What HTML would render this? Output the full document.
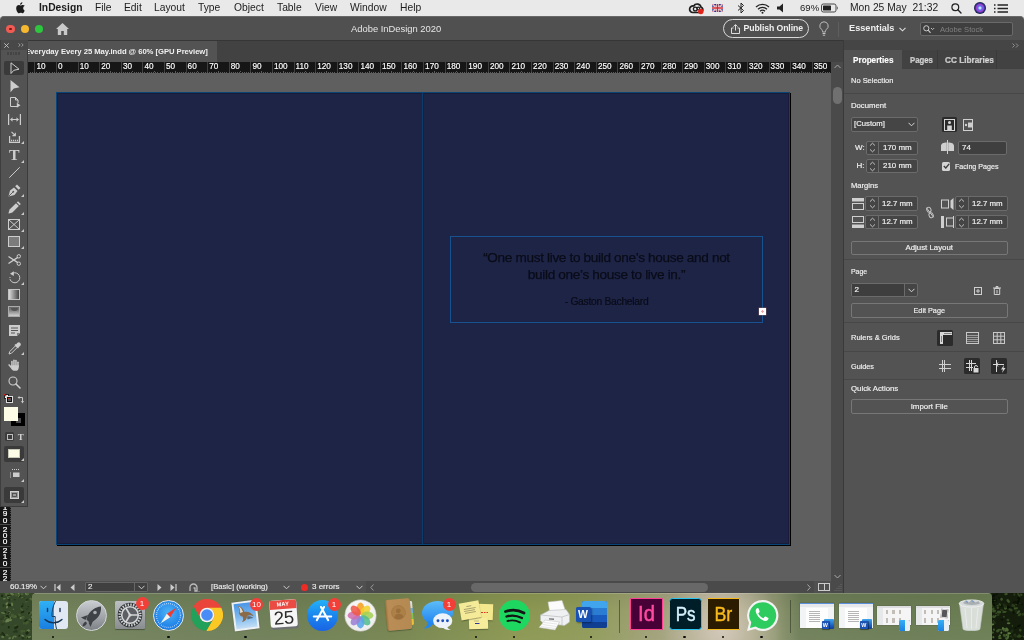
<!DOCTYPE html>
<html lang="en">
<head>
<meta charset="utf-8">
<title>Adobe InDesign 2020</title>
<style>
*{box-sizing:border-box;margin:0;padding:0}
html,body{width:1024px;height:640px;overflow:hidden;background:#1f2a14}
body{position:relative;font-family:"Liberation Sans",sans-serif;color:#e8e8e8;font-size:8px;-webkit-font-smoothing:antialiased}
.abs,.abs-all *{position:absolute}
#root{position:absolute;left:0;top:0;width:1024px;height:640px;overflow:hidden;will-change:transform}
#root div,#root span,#root svg{position:absolute}
.t{white-space:nowrap;line-height:1}
/* mac menubar */
#menubar{left:0;top:0;width:1024px;height:22px;background:#e9e9ea}
#menubar .t{color:#1c1c1c;font-size:10.3px;top:3px}
/* app */
#titlebar{left:0;top:16px;width:1024px;height:24px;background:#505050;border-top:1px solid #686868;border-radius:4px 4px 0 0}
#tabbar{left:28px;top:40px;width:815px;height:22px;background:#424242;border-top:1px solid #363636}
#doctab{left:0;top:0;width:189px;height:21px;background:#535353}
#ruler{left:28px;top:62px;width:803px;height:11px;background:#161616;overflow:hidden}
#ruler .t{font-size:8.200px;color:#fff;top:1px;-webkit-text-stroke:.15px #fff}
#ruler i{position:absolute;top:0;width:1px;height:11px;background:#404040}
#paste{left:28px;top:73px;width:803px;height:508px;background:#5f5f5f}
#vruler{left:0;top:507px;width:11px;height:74px;background:#161616;overflow:hidden}
#tools{left:1px;top:40px;width:27px;height:467px;background:#535353;border-right:1px solid #3c3c3c;border-bottom:1px solid #3c3c3c}
#vscroll{left:831px;top:62px;width:12px;height:519px;background:#4a4a4a}
#status{left:0;top:581px;width:843px;height:12px;background:#505050}
#status .t{font-size:8px;color:#ececec;top:2px;-webkit-text-stroke:.15px #ececec}
#panel{left:843px;top:40px;width:181px;height:553px;background:#535353;border-left:1px solid #3a3a3a}
#panel .t{font-size:8px;color:#f0f0f0;-webkit-text-stroke:.18px #f0f0f0}
.fld{background:#454545;border:1px solid #6b6b6b;border-radius:2px}
.btn{border:1px solid #777;border-radius:2px;text-align:center}
.hr{height:1px;background:#474747;left:0;width:181px}
/* dock */
#dock{left:32px;top:593px;width:960px;height:47px;border-radius:4px 4px 0 0;overflow:hidden}
.dot{width:2.600px;height:2.600px;border-radius:50%;background:#0c0c0c;top:635.700px;margin-left:-.3px}
.badge{width:13px;height:13px;border-radius:50%;background:#f23f38;color:#fff;font-size:8px;text-align:center;line-height:13px;margin:-.5px 0 0 -.5px}
</style>
</head>
<body>
<div id="root">

<!-- DESKTOP -->
<div id="desk" style="left:0;top:592px;width:1024px;height:48px;background:#1c2612"></div><svg style="left:0px;top:593px" width="33" height="47" viewBox="0 0 33 47"><rect width="33" height="47" fill="#36482a"/><ellipse cx="10.7" cy="7.1" rx="1.8" ry="0.7" fill="#44592f" transform="rotate(-49 10.7 7.1)"/><ellipse cx="19.2" cy="42.8" rx="1.1" ry="0.7" fill="#1c2a12" transform="rotate(-52 19.2 42.8)"/><ellipse cx="3.0" cy="20.0" rx="2.1" ry="0.7" fill="#5e7645" transform="rotate(16 3.0 20.0)"/><ellipse cx="19.2" cy="2.9" rx="1.7" ry="0.6" fill="#5e7645" transform="rotate(-54 19.2 2.9)"/><ellipse cx="28.3" cy="13.6" rx="1.0" ry="0.7" fill="#26361a" transform="rotate(7 28.3 13.6)"/><ellipse cx="22.5" cy="4.8" rx="1.7" ry="0.8" fill="#4f6638" transform="rotate(6 22.5 4.8)"/><ellipse cx="2.1" cy="2.8" rx="1.1" ry="1.3" fill="#1c2a12" transform="rotate(33 2.1 2.8)"/><ellipse cx="15.4" cy="43.4" rx="1.4" ry="0.8" fill="#5e7645" transform="rotate(24 15.4 43.4)"/><ellipse cx="8.1" cy="27.0" rx="1.6" ry="1.5" fill="#6b8050" transform="rotate(-6 8.1 27.0)"/><ellipse cx="20.1" cy="3.4" rx="1.6" ry="0.8" fill="#26361a" transform="rotate(-42 20.1 3.4)"/><ellipse cx="16.1" cy="1.8" rx="1.9" ry="1.4" fill="#44592f" transform="rotate(35 16.1 1.8)"/><ellipse cx="27.0" cy="16.0" rx="1.4" ry="1.1" fill="#2f4122" transform="rotate(-5 27.0 16.0)"/><ellipse cx="27.7" cy="44.4" rx="1.6" ry="1.3" fill="#4f6638" transform="rotate(28 27.7 44.4)"/><ellipse cx="10.2" cy="27.2" rx="1.9" ry="1.0" fill="#6b8050" transform="rotate(-14 10.2 27.2)"/><ellipse cx="22.1" cy="1.1" rx="1.5" ry="0.8" fill="#4f6638" transform="rotate(-1 22.1 1.1)"/><ellipse cx="7.2" cy="13.5" rx="2.0" ry="1.0" fill="#2f4122" transform="rotate(-0 7.2 13.5)"/><ellipse cx="5.5" cy="18.9" rx="1.2" ry="0.7" fill="#1c2a12" transform="rotate(44 5.5 18.9)"/><ellipse cx="9.2" cy="19.5" rx="1.4" ry="1.5" fill="#5e7645" transform="rotate(-42 9.2 19.5)"/><ellipse cx="5.8" cy="10.9" rx="1.2" ry="1.1" fill="#44592f" transform="rotate(-38 5.8 10.9)"/><ellipse cx="9.3" cy="6.8" rx="1.7" ry="1.2" fill="#26361a" transform="rotate(54 9.3 6.8)"/><ellipse cx="22.8" cy="24.2" rx="1.8" ry="1.3" fill="#4f6638" transform="rotate(-5 22.8 24.2)"/><ellipse cx="28.7" cy="44.7" rx="1.9" ry="1.2" fill="#1c2a12" transform="rotate(-12 28.7 44.7)"/><ellipse cx="3.4" cy="29.8" rx="0.9" ry="0.7" fill="#5e7645" transform="rotate(-7 3.4 29.8)"/><ellipse cx="3.6" cy="28.2" rx="1.0" ry="1.2" fill="#44592f" transform="rotate(-48 3.6 28.2)"/><ellipse cx="12.0" cy="1.2" rx="2.2" ry="1.2" fill="#5e7645" transform="rotate(16 12.0 1.2)"/><ellipse cx="31.5" cy="28.3" rx="1.6" ry="0.7" fill="#1c2a12" transform="rotate(59 31.5 28.3)"/><ellipse cx="15.4" cy="22.7" rx="0.9" ry="0.7" fill="#26361a" transform="rotate(29 15.4 22.7)"/><ellipse cx="15.8" cy="32.5" rx="1.6" ry="0.8" fill="#44592f" transform="rotate(-17 15.8 32.5)"/><ellipse cx="22.8" cy="43.0" rx="2.0" ry="0.9" fill="#6b8050" transform="rotate(44 22.8 43.0)"/><ellipse cx="23.0" cy="12.3" rx="1.4" ry="0.8" fill="#2f4122" transform="rotate(-33 23.0 12.3)"/><ellipse cx="17.9" cy="23.6" rx="1.8" ry="1.2" fill="#2f4122" transform="rotate(58 17.9 23.6)"/><ellipse cx="28.1" cy="37.9" rx="2.1" ry="1.3" fill="#5e7645" transform="rotate(-36 28.1 37.9)"/><ellipse cx="16.3" cy="34.4" rx="2.4" ry="1.4" fill="#1c2a12" transform="rotate(-29 16.3 34.4)"/><ellipse cx="22.9" cy="45.0" rx="1.5" ry="1.5" fill="#26361a" transform="rotate(55 22.9 45.0)"/><ellipse cx="12.0" cy="10.4" rx="1.2" ry="0.8" fill="#5e7645" transform="rotate(-2 12.0 10.4)"/><ellipse cx="32.5" cy="28.7" rx="0.8" ry="1.5" fill="#26361a" transform="rotate(36 32.5 28.7)"/><ellipse cx="2.8" cy="31.0" rx="2.3" ry="1.4" fill="#2f4122" transform="rotate(-36 2.8 31.0)"/><ellipse cx="29.3" cy="20.4" rx="1.8" ry="0.7" fill="#6b8050" transform="rotate(-12 29.3 20.4)"/><ellipse cx="13.2" cy="44.5" rx="2.0" ry="0.8" fill="#5e7645" transform="rotate(-57 13.2 44.5)"/><ellipse cx="19.5" cy="21.9" rx="1.8" ry="1.2" fill="#44592f" transform="rotate(58 19.5 21.9)"/><ellipse cx="21.7" cy="16.5" rx="1.7" ry="0.7" fill="#4f6638" transform="rotate(36 21.7 16.5)"/><ellipse cx="24.0" cy="4.8" rx="2.0" ry="0.7" fill="#2f4122" transform="rotate(-37 24.0 4.8)"/><ellipse cx="28.8" cy="1.3" rx="1.1" ry="1.1" fill="#2f4122" transform="rotate(10 28.8 1.3)"/><ellipse cx="8.6" cy="19.7" rx="1.0" ry="1.5" fill="#26361a" transform="rotate(48 8.6 19.7)"/><ellipse cx="21.9" cy="38.3" rx="1.6" ry="1.4" fill="#44592f" transform="rotate(-44 21.9 38.3)"/><ellipse cx="5.0" cy="24.0" rx="2.2" ry="1.4" fill="#44592f" transform="rotate(-60 5.0 24.0)"/><ellipse cx="26.4" cy="8.1" rx="1.6" ry="1.3" fill="#44592f" transform="rotate(-53 26.4 8.1)"/><ellipse cx="22.5" cy="24.9" rx="1.6" ry="1.4" fill="#44592f" transform="rotate(-53 22.5 24.9)"/><ellipse cx="6.3" cy="2.0" rx="1.0" ry="1.1" fill="#4f6638" transform="rotate(31 6.3 2.0)"/><ellipse cx="30.1" cy="20.8" rx="1.8" ry="1.1" fill="#44592f" transform="rotate(-36 30.1 20.8)"/><ellipse cx="9.1" cy="23.9" rx="2.1" ry="1.1" fill="#5e7645" transform="rotate(24 9.1 23.9)"/><ellipse cx="28.9" cy="44.3" rx="1.2" ry="1.2" fill="#5e7645" transform="rotate(41 28.9 44.3)"/><ellipse cx="4.5" cy="5.7" rx="1.5" ry="0.7" fill="#5e7645" transform="rotate(-9 4.5 5.7)"/><ellipse cx="7.0" cy="14.2" rx="1.0" ry="1.4" fill="#6b8050" transform="rotate(17 7.0 14.2)"/><ellipse cx="12.1" cy="11.9" rx="1.0" ry="1.1" fill="#6b8050" transform="rotate(54 12.1 11.9)"/><ellipse cx="13.1" cy="22.9" rx="2.4" ry="1.4" fill="#5e7645" transform="rotate(25 13.1 22.9)"/><ellipse cx="32.8" cy="19.0" rx="1.5" ry="1.0" fill="#4f6638" transform="rotate(27 32.8 19.0)"/><ellipse cx="0.6" cy="26.0" rx="1.5" ry="0.6" fill="#26361a" transform="rotate(2 0.6 26.0)"/><ellipse cx="9.7" cy="45.2" rx="1.0" ry="1.5" fill="#5e7645" transform="rotate(57 9.7 45.2)"/><ellipse cx="3.5" cy="12.5" rx="0.9" ry="1.4" fill="#26361a" transform="rotate(31 3.5 12.5)"/><ellipse cx="27.1" cy="39.9" rx="1.9" ry="1.5" fill="#1c2a12" transform="rotate(-42 27.1 39.9)"/><ellipse cx="30.3" cy="26.8" rx="1.9" ry="0.7" fill="#4f6638" transform="rotate(36 30.3 26.8)"/><ellipse cx="6.1" cy="42.1" rx="1.2" ry="0.6" fill="#4f6638" transform="rotate(36 6.1 42.1)"/><ellipse cx="2.8" cy="40.2" rx="0.9" ry="1.5" fill="#1c2a12" transform="rotate(-59 2.8 40.2)"/><ellipse cx="32.8" cy="19.6" rx="2.3" ry="1.2" fill="#4f6638" transform="rotate(3 32.8 19.6)"/><ellipse cx="7.9" cy="5.1" rx="1.1" ry="0.7" fill="#5e7645" transform="rotate(52 7.9 5.1)"/><ellipse cx="20.7" cy="25.0" rx="1.1" ry="1.0" fill="#6b8050" transform="rotate(-39 20.7 25.0)"/><ellipse cx="11.5" cy="0.9" rx="1.2" ry="0.6" fill="#6b8050" transform="rotate(1 11.5 0.9)"/><ellipse cx="32.3" cy="24.2" rx="1.2" ry="1.0" fill="#6b8050" transform="rotate(38 32.3 24.2)"/><ellipse cx="14.3" cy="23.3" rx="2.1" ry="1.0" fill="#44592f" transform="rotate(-23 14.3 23.3)"/><ellipse cx="7.1" cy="10.8" rx="1.1" ry="1.5" fill="#6b8050" transform="rotate(16 7.1 10.8)"/><ellipse cx="13.4" cy="16.3" rx="0.9" ry="0.7" fill="#4f6638" transform="rotate(15 13.4 16.3)"/><ellipse cx="29.0" cy="20.2" rx="0.9" ry="1.3" fill="#1c2a12" transform="rotate(44 29.0 20.2)"/><ellipse cx="22.1" cy="13.3" rx="1.2" ry="0.9" fill="#1c2a12" transform="rotate(-38 22.1 13.3)"/><ellipse cx="8.9" cy="0.2" rx="1.4" ry="0.9" fill="#44592f" transform="rotate(-21 8.9 0.2)"/><ellipse cx="1.1" cy="41.5" rx="1.1" ry="0.8" fill="#26361a" transform="rotate(-14 1.1 41.5)"/><ellipse cx="15.7" cy="23.6" rx="1.1" ry="1.1" fill="#4f6638" transform="rotate(-49 15.7 23.6)"/><ellipse cx="27.0" cy="6.8" rx="1.7" ry="1.0" fill="#26361a" transform="rotate(-23 27.0 6.8)"/><ellipse cx="7.7" cy="27.5" rx="1.6" ry="1.4" fill="#6b8050" transform="rotate(47 7.7 27.5)"/><ellipse cx="25.9" cy="28.0" rx="2.0" ry="1.3" fill="#1c2a12" transform="rotate(-42 25.9 28.0)"/><ellipse cx="23.9" cy="30.2" rx="0.9" ry="1.4" fill="#44592f" transform="rotate(15 23.9 30.2)"/><ellipse cx="24.2" cy="38.2" rx="1.0" ry="1.1" fill="#44592f" transform="rotate(8 24.2 38.2)"/><ellipse cx="26.8" cy="0.8" rx="1.9" ry="1.4" fill="#6b8050" transform="rotate(22 26.8 0.8)"/><ellipse cx="22.9" cy="10.8" rx="0.8" ry="0.7" fill="#26361a" transform="rotate(55 22.9 10.8)"/><ellipse cx="12.4" cy="21.2" rx="0.9" ry="0.6" fill="#44592f" transform="rotate(22 12.4 21.2)"/><ellipse cx="16.1" cy="0.2" rx="2.1" ry="1.3" fill="#44592f" transform="rotate(48 16.1 0.2)"/><ellipse cx="3.0" cy="24.7" rx="2.0" ry="1.1" fill="#2f4122" transform="rotate(-51 3.0 24.7)"/><ellipse cx="8.8" cy="34.3" rx="1.1" ry="1.3" fill="#1c2a12" transform="rotate(-1 8.8 34.3)"/><ellipse cx="12.6" cy="22.5" rx="1.9" ry="1.4" fill="#44592f" transform="rotate(16 12.6 22.5)"/><ellipse cx="6.5" cy="28.2" rx="1.3" ry="1.3" fill="#6b8050" transform="rotate(-23 6.5 28.2)"/><ellipse cx="18.7" cy="0.6" rx="0.9" ry="0.9" fill="#6b8050" transform="rotate(-48 18.7 0.6)"/><ellipse cx="7.2" cy="23.0" rx="1.9" ry="0.9" fill="#1c2a12" transform="rotate(-4 7.2 23.0)"/><ellipse cx="3.9" cy="42.0" rx="1.1" ry="1.6" fill="#1c2a12" transform="rotate(-58 3.9 42.0)"/><ellipse cx="15.1" cy="38.5" rx="2.3" ry="1.0" fill="#26361a" transform="rotate(-14 15.1 38.5)"/><ellipse cx="30.2" cy="43.7" rx="0.9" ry="0.7" fill="#6b8050" transform="rotate(3 30.2 43.7)"/><ellipse cx="31.4" cy="6.2" rx="2.1" ry="1.1" fill="#4f6638" transform="rotate(24 31.4 6.2)"/><ellipse cx="7.6" cy="42.2" rx="1.6" ry="0.6" fill="#4f6638" transform="rotate(54 7.6 42.2)"/><ellipse cx="22.5" cy="19.1" rx="2.0" ry="1.0" fill="#1c2a12" transform="rotate(-22 22.5 19.1)"/><ellipse cx="27.7" cy="0.1" rx="2.0" ry="1.4" fill="#4f6638" transform="rotate(53 27.7 0.1)"/><ellipse cx="6.5" cy="0.6" rx="2.0" ry="0.9" fill="#4f6638" transform="rotate(-13 6.5 0.6)"/><ellipse cx="33.0" cy="27.7" rx="1.4" ry="1.0" fill="#26361a" transform="rotate(43 33.0 27.7)"/><ellipse cx="9.3" cy="2.4" rx="1.9" ry="1.2" fill="#5e7645" transform="rotate(-30 9.3 2.4)"/><ellipse cx="8.8" cy="24.0" rx="1.1" ry="1.0" fill="#1c2a12" transform="rotate(46 8.8 24.0)"/><ellipse cx="26.8" cy="29.7" rx="2.3" ry="1.5" fill="#44592f" transform="rotate(-36 26.8 29.7)"/><ellipse cx="2.7" cy="43.9" rx="1.5" ry="1.2" fill="#5e7645" transform="rotate(17 2.7 43.9)"/><ellipse cx="9.4" cy="2.3" rx="2.3" ry="0.7" fill="#1c2a12" transform="rotate(-10 9.4 2.3)"/><ellipse cx="9.3" cy="12.0" rx="2.0" ry="1.3" fill="#1c2a12" transform="rotate(19 9.3 12.0)"/><ellipse cx="9.9" cy="26.2" rx="1.4" ry="0.8" fill="#5e7645" transform="rotate(-51 9.9 26.2)"/><ellipse cx="16.5" cy="38.2" rx="1.7" ry="1.1" fill="#26361a" transform="rotate(60 16.5 38.2)"/><ellipse cx="14.8" cy="6.6" rx="1.1" ry="0.7" fill="#26361a" transform="rotate(7 14.8 6.6)"/></svg><svg style="left:992px;top:593px" width="32" height="47" viewBox="0 0 32 47"><rect width="32" height="47" fill="#141d0c"/><ellipse cx="10.2" cy="17.3" rx="2.1" ry="0.8" fill="#2a3b1a" transform="rotate(30 10.2 17.3)"/><ellipse cx="13.2" cy="19.5" rx="1.6" ry="1.0" fill="#0c1206" transform="rotate(30 13.2 19.5)"/><ellipse cx="15.9" cy="27.0" rx="1.4" ry="1.3" fill="#33481f" transform="rotate(16 15.9 27.0)"/><ellipse cx="27.6" cy="10.2" rx="1.2" ry="0.8" fill="#1f2d12" transform="rotate(17 27.6 10.2)"/><ellipse cx="13.8" cy="14.7" rx="2.1" ry="1.6" fill="#3c5228" transform="rotate(-56 13.8 14.7)"/><ellipse cx="22.7" cy="42.1" rx="1.6" ry="1.2" fill="#2a3b1a" transform="rotate(-51 22.7 42.1)"/><ellipse cx="29.8" cy="43.6" rx="1.6" ry="1.1" fill="#1f2d12" transform="rotate(-30 29.8 43.6)"/><ellipse cx="3.5" cy="7.3" rx="1.6" ry="1.3" fill="#0a0f05" transform="rotate(24 3.5 7.3)"/><ellipse cx="27.1" cy="42.1" rx="0.9" ry="1.4" fill="#2a3b1a" transform="rotate(34 27.1 42.1)"/><ellipse cx="7.4" cy="43.2" rx="1.8" ry="0.9" fill="#3c5228" transform="rotate(-30 7.4 43.2)"/><ellipse cx="20.4" cy="32.8" rx="1.0" ry="0.7" fill="#33481f" transform="rotate(53 20.4 32.8)"/><ellipse cx="6.1" cy="12.3" rx="2.1" ry="0.6" fill="#33481f" transform="rotate(-24 6.1 12.3)"/><ellipse cx="14.7" cy="45.1" rx="1.8" ry="1.5" fill="#3c5228" transform="rotate(-32 14.7 45.1)"/><ellipse cx="7.9" cy="45.1" rx="1.9" ry="0.9" fill="#4f6a35" transform="rotate(-0 7.9 45.1)"/><ellipse cx="21.6" cy="19.7" rx="1.2" ry="1.3" fill="#0c1206" transform="rotate(-33 21.6 19.7)"/><ellipse cx="1.1" cy="15.9" rx="1.5" ry="1.3" fill="#3c5228" transform="rotate(-59 1.1 15.9)"/><ellipse cx="9.3" cy="39.7" rx="0.9" ry="1.1" fill="#5f7a45" transform="rotate(32 9.3 39.7)"/><ellipse cx="6.2" cy="21.9" rx="1.2" ry="1.5" fill="#2a3b1a" transform="rotate(54 6.2 21.9)"/><ellipse cx="15.9" cy="8.8" rx="1.2" ry="1.0" fill="#0a0f05" transform="rotate(-53 15.9 8.8)"/><ellipse cx="19.0" cy="43.3" rx="0.9" ry="0.6" fill="#33481f" transform="rotate(-43 19.0 43.3)"/><ellipse cx="1.7" cy="2.8" rx="1.4" ry="1.5" fill="#0c1206" transform="rotate(28 1.7 2.8)"/><ellipse cx="31.9" cy="43.8" rx="1.3" ry="0.8" fill="#33481f" transform="rotate(30 31.9 43.8)"/><ellipse cx="1.0" cy="31.2" rx="1.4" ry="1.0" fill="#5f7a45" transform="rotate(-40 1.0 31.2)"/><ellipse cx="0.1" cy="13.2" rx="1.4" ry="1.6" fill="#2a3b1a" transform="rotate(7 0.1 13.2)"/><ellipse cx="24.3" cy="17.9" rx="2.0" ry="0.9" fill="#1f2d12" transform="rotate(-49 24.3 17.9)"/><ellipse cx="22.6" cy="9.2" rx="1.7" ry="1.0" fill="#0c1206" transform="rotate(-16 22.6 9.2)"/><ellipse cx="28.7" cy="1.4" rx="1.5" ry="1.4" fill="#1f2d12" transform="rotate(-55 28.7 1.4)"/><ellipse cx="1.1" cy="2.9" rx="2.3" ry="0.9" fill="#0a0f05" transform="rotate(-52 1.1 2.9)"/><ellipse cx="19.4" cy="17.1" rx="1.3" ry="1.6" fill="#2a3b1a" transform="rotate(-29 19.4 17.1)"/><ellipse cx="22.9" cy="14.9" rx="1.2" ry="0.6" fill="#33481f" transform="rotate(50 22.9 14.9)"/><ellipse cx="20.3" cy="44.3" rx="0.8" ry="0.8" fill="#1f2d12" transform="rotate(26 20.3 44.3)"/><ellipse cx="14.9" cy="36.5" rx="2.1" ry="1.5" fill="#4f6a35" transform="rotate(51 14.9 36.5)"/><ellipse cx="5.9" cy="37.7" rx="2.0" ry="1.4" fill="#3c5228" transform="rotate(-32 5.9 37.7)"/><ellipse cx="27.6" cy="21.7" rx="2.1" ry="1.2" fill="#33481f" transform="rotate(-36 27.6 21.7)"/><ellipse cx="24.1" cy="11.6" rx="0.9" ry="0.6" fill="#33481f" transform="rotate(5 24.1 11.6)"/><ellipse cx="5.1" cy="20.0" rx="1.0" ry="0.7" fill="#33481f" transform="rotate(-50 5.1 20.0)"/><ellipse cx="3.1" cy="23.4" rx="1.9" ry="1.0" fill="#3c5228" transform="rotate(-44 3.1 23.4)"/><ellipse cx="14.7" cy="41.9" rx="1.2" ry="1.1" fill="#4f6a35" transform="rotate(34 14.7 41.9)"/><ellipse cx="9.4" cy="13.1" rx="1.2" ry="0.9" fill="#0c1206" transform="rotate(-36 9.4 13.1)"/><ellipse cx="7.9" cy="11.5" rx="1.0" ry="1.5" fill="#33481f" transform="rotate(-37 7.9 11.5)"/><ellipse cx="2.1" cy="11.8" rx="1.2" ry="1.1" fill="#0a0f05" transform="rotate(37 2.1 11.8)"/><ellipse cx="20.9" cy="46.6" rx="1.0" ry="1.1" fill="#3c5228" transform="rotate(41 20.9 46.6)"/><ellipse cx="29.3" cy="1.9" rx="1.3" ry="0.7" fill="#3c5228" transform="rotate(12 29.3 1.9)"/><ellipse cx="26.5" cy="9.1" rx="0.9" ry="1.1" fill="#3c5228" transform="rotate(-6 26.5 9.1)"/><ellipse cx="8.3" cy="36.6" rx="2.3" ry="0.7" fill="#3c5228" transform="rotate(14 8.3 36.6)"/><ellipse cx="7.0" cy="17.3" rx="1.0" ry="0.8" fill="#0c1206" transform="rotate(-55 7.0 17.3)"/><ellipse cx="23.4" cy="43.0" rx="2.1" ry="1.4" fill="#1f2d12" transform="rotate(21 23.4 43.0)"/><ellipse cx="5.9" cy="14.7" rx="1.1" ry="1.4" fill="#33481f" transform="rotate(-2 5.9 14.7)"/><ellipse cx="13.1" cy="37.4" rx="1.9" ry="0.8" fill="#4f6a35" transform="rotate(18 13.1 37.4)"/><ellipse cx="12.7" cy="12.7" rx="2.4" ry="1.3" fill="#1f2d12" transform="rotate(54 12.7 12.7)"/><ellipse cx="10.0" cy="26.6" rx="1.4" ry="1.0" fill="#0c1206" transform="rotate(17 10.0 26.6)"/><ellipse cx="12.5" cy="19.0" rx="2.3" ry="1.0" fill="#3c5228" transform="rotate(-9 12.5 19.0)"/><ellipse cx="26.3" cy="19.1" rx="2.2" ry="1.1" fill="#3c5228" transform="rotate(-44 26.3 19.1)"/><ellipse cx="1.7" cy="6.7" rx="2.1" ry="1.0" fill="#33481f" transform="rotate(15 1.7 6.7)"/><ellipse cx="11.9" cy="23.7" rx="1.0" ry="0.9" fill="#33481f" transform="rotate(-39 11.9 23.7)"/><ellipse cx="2.1" cy="18.0" rx="2.0" ry="1.4" fill="#3c5228" transform="rotate(-24 2.1 18.0)"/><ellipse cx="26.8" cy="2.0" rx="2.3" ry="0.9" fill="#33481f" transform="rotate(51 26.8 2.0)"/><ellipse cx="12.4" cy="42.5" rx="1.8" ry="1.4" fill="#3c5228" transform="rotate(34 12.4 42.5)"/><ellipse cx="7.1" cy="19.0" rx="2.2" ry="1.4" fill="#3c5228" transform="rotate(8 7.1 19.0)"/><ellipse cx="1.3" cy="44.1" rx="1.1" ry="1.0" fill="#4f6a35" transform="rotate(56 1.3 44.1)"/><ellipse cx="26.1" cy="9.1" rx="2.2" ry="1.4" fill="#0a0f05" transform="rotate(-55 26.1 9.1)"/><ellipse cx="26.8" cy="5.5" rx="1.8" ry="1.2" fill="#0a0f05" transform="rotate(33 26.8 5.5)"/><ellipse cx="20.8" cy="14.5" rx="1.2" ry="1.0" fill="#0c1206" transform="rotate(-6 20.8 14.5)"/><ellipse cx="14.0" cy="1.1" rx="1.8" ry="1.1" fill="#3c5228" transform="rotate(-6 14.0 1.1)"/><ellipse cx="19.8" cy="38.5" rx="2.1" ry="1.4" fill="#1f2d12" transform="rotate(-47 19.8 38.5)"/><ellipse cx="4.1" cy="20.2" rx="0.9" ry="1.0" fill="#33481f" transform="rotate(19 4.1 20.2)"/><ellipse cx="1.3" cy="6.1" rx="2.3" ry="0.9" fill="#0a0f05" transform="rotate(1 1.3 6.1)"/><ellipse cx="1.7" cy="23.7" rx="1.4" ry="1.6" fill="#3c5228" transform="rotate(-57 1.7 23.7)"/><ellipse cx="2.1" cy="28.9" rx="1.9" ry="0.7" fill="#3c5228" transform="rotate(58 2.1 28.9)"/><ellipse cx="15.7" cy="45.0" rx="2.3" ry="0.8" fill="#4f6a35" transform="rotate(-52 15.7 45.0)"/><ellipse cx="11.2" cy="35.5" rx="1.1" ry="1.5" fill="#5f7a45" transform="rotate(-43 11.2 35.5)"/><ellipse cx="16.1" cy="43.2" rx="1.1" ry="0.9" fill="#4f6a35" transform="rotate(-22 16.1 43.2)"/><ellipse cx="1.2" cy="8.6" rx="1.1" ry="1.5" fill="#0a0f05" transform="rotate(-21 1.2 8.6)"/><ellipse cx="12.1" cy="37.2" rx="1.2" ry="1.4" fill="#3c5228" transform="rotate(43 12.1 37.2)"/><ellipse cx="30.9" cy="21.3" rx="1.6" ry="1.3" fill="#2a3b1a" transform="rotate(-30 30.9 21.3)"/><ellipse cx="17.1" cy="40.3" rx="2.0" ry="1.0" fill="#5f7a45" transform="rotate(9 17.1 40.3)"/><ellipse cx="11.5" cy="35.9" rx="1.5" ry="0.8" fill="#4f6a35" transform="rotate(-24 11.5 35.9)"/><ellipse cx="16.5" cy="14.6" rx="2.3" ry="1.5" fill="#0a0f05" transform="rotate(47 16.5 14.6)"/><ellipse cx="23.5" cy="35.1" rx="1.2" ry="0.9" fill="#0a0f05" transform="rotate(-8 23.5 35.1)"/><ellipse cx="16.4" cy="42.1" rx="1.0" ry="0.8" fill="#4f6a35" transform="rotate(-57 16.4 42.1)"/><ellipse cx="0.1" cy="16.7" rx="1.0" ry="1.0" fill="#3c5228" transform="rotate(-10 0.1 16.7)"/><ellipse cx="9.6" cy="6.3" rx="1.4" ry="1.4" fill="#3c5228" transform="rotate(-44 9.6 6.3)"/><ellipse cx="30.0" cy="11.4" rx="1.0" ry="0.7" fill="#0a0f05" transform="rotate(-43 30.0 11.4)"/><ellipse cx="21.3" cy="12.7" rx="2.1" ry="1.6" fill="#2a3b1a" transform="rotate(17 21.3 12.7)"/><ellipse cx="18.0" cy="16.5" rx="1.8" ry="1.0" fill="#33481f" transform="rotate(28 18.0 16.5)"/><ellipse cx="8.0" cy="42.5" rx="0.9" ry="1.1" fill="#4f6a35" transform="rotate(-31 8.0 42.5)"/><ellipse cx="1.9" cy="36.6" rx="0.8" ry="1.2" fill="#4f6a35" transform="rotate(-10 1.9 36.6)"/><ellipse cx="16.6" cy="30.2" rx="1.8" ry="1.0" fill="#4f6a35" transform="rotate(1 16.6 30.2)"/><ellipse cx="2.0" cy="29.4" rx="2.4" ry="1.3" fill="#1f2d12" transform="rotate(26 2.0 29.4)"/><ellipse cx="0.2" cy="39.7" rx="2.0" ry="1.1" fill="#3c5228" transform="rotate(-6 0.2 39.7)"/><ellipse cx="7.2" cy="4.9" rx="1.2" ry="0.6" fill="#0c1206" transform="rotate(47 7.2 4.9)"/><ellipse cx="29.6" cy="44.3" rx="1.2" ry="0.7" fill="#0a0f05" transform="rotate(6 29.6 44.3)"/><ellipse cx="14.0" cy="37.1" rx="1.6" ry="0.9" fill="#4f6a35" transform="rotate(-50 14.0 37.1)"/><ellipse cx="16.2" cy="8.0" rx="2.2" ry="1.4" fill="#3c5228" transform="rotate(53 16.2 8.0)"/><ellipse cx="23.9" cy="15.4" rx="2.2" ry="0.9" fill="#3c5228" transform="rotate(-14 23.9 15.4)"/><ellipse cx="27.3" cy="43.3" rx="2.4" ry="1.4" fill="#33481f" transform="rotate(-4 27.3 43.3)"/><ellipse cx="26.9" cy="32.8" rx="2.2" ry="1.0" fill="#0a0f05" transform="rotate(-32 26.9 32.8)"/><ellipse cx="28.3" cy="37.1" rx="1.4" ry="1.2" fill="#33481f" transform="rotate(49 28.3 37.1)"/><ellipse cx="4.6" cy="1.3" rx="1.0" ry="1.5" fill="#0c1206" transform="rotate(57 4.6 1.3)"/><ellipse cx="22.4" cy="1.5" rx="1.0" ry="1.2" fill="#2a3b1a" transform="rotate(24 22.4 1.5)"/></svg>

<!-- MENUBAR -->
<div id="menubar">
<svg style="left:15px;top:2px" width="11" height="12" viewBox="0 0 170 200"><path fill="#1c1c1c" d="M150 68c-1 1-20 11-20 35 0 28 24 37 25 38 0 1-4 13-12 25-7 11-15 21-27 21s-15-7-28-7c-13 0-18 7-29 7s-19-10-27-22C21 150 13 126 13 104c0-36 23-55 46-55 12 0 22 8 30 8 7 0 19-9 33-9 5 0 24 1 37 19zM106 34c6-7 10-17 10-26 0-1 0-3-1-4-9 0-20 6-27 14-5 6-10 15-10 25 0 1 0 3 1 3 1 0 2 1 3 1 8 0 18-6 24-13z"/></svg>
<span class="t" style="left:39px;font-weight:bold">InDesign</span>
<span class="t" style="left:95px">File</span>
<span class="t" style="left:124px">Edit</span>
<span class="t" style="left:154px">Layout</span>
<span class="t" style="left:198px">Type</span>
<span class="t" style="left:234px">Object</span>
<span class="t" style="left:277px">Table</span>
<span class="t" style="left:315px">View</span>
<span class="t" style="left:350px">Window</span>
<span class="t" style="left:400px">Help</span>
<!-- right status icons -->
<svg style="left:688px;top:1.500px" width="17" height="13" viewBox="0 0 17 13"><path d="M4.800 10.500a3.300 3.300 0 1 1 .9-6.500 4 4 0 0 1 7.400 1.300 2.700 2.700 0 0 1-.6 5.200z" fill="none" stroke="#1e1e1e" stroke-width="1.700"/><circle cx="7.300" cy="7" r="1.900" fill="none" stroke="#1e1e1e" stroke-width="1.300"/><circle cx="10.300" cy="6.500" r="1.400" fill="none" stroke="#1e1e1e" stroke-width="1.100"/><circle cx="12.800" cy="9.500" r="2.700" fill="#e3241b"/></svg>
<svg style="left:712px;top:4px" width="11" height="8" viewBox="0 0 22 16"><rect width="22" height="16" fill="#2b3a8c"/><path d="M0 0L22 16M22 0L0 16" stroke="#fff" stroke-width="3"/><path d="M0 0L22 16M22 0L0 16" stroke="#cf2a35" stroke-width="1.200"/><path d="M11 0V16M0 8H22" stroke="#fff" stroke-width="5"/><path d="M11 0V16M0 8H22" stroke="#cf2a35" stroke-width="3"/></svg>
<svg style="left:737px;top:2px" width="8" height="12" viewBox="0 0 8 12"><path d="M1 3.500L6.500 8.500 4 11V1L6.500 3.500 1 8.500" fill="none" stroke="#222" stroke-width="1"/></svg>
<svg style="left:755px;top:3px" width="15" height="11" viewBox="0 0 15 11"><path d="M1 4a9.500 9.500 0 0 1 13 0M3 6.200a6.500 6.500 0 0 1 9 0M5 8.300a3.600 3.600 0 0 1 5 0" fill="none" stroke="#222" stroke-width="1.300"/><circle cx="7.500" cy="9.800" r="1" fill="#222"/></svg>
<svg style="left:777px;top:3px" width="9" height="10" viewBox="0 0 9 10"><path d="M0 3.500h2.500L6 .5v9L2.500 6.500H0z" fill="#222"/></svg>
<span class="t" style="left:800px;font-size:9.600px;top:2.800px">69%</span>
<svg style="left:821px;top:3px" width="18" height="10" viewBox="0 0 18 10"><rect x=".5" y="1" width="14.500" height="8" rx="1.800" fill="none" stroke="#444" stroke-width="1"/><rect x="2" y="2.500" width="8" height="5" rx=".6" fill="#222"/><path d="M16 3.500v3c1-.2 1-2.800 0-3z" fill="#444"/></svg>
<span class="t" style="left:850px">Mon 25 May&nbsp; 21:32</span>
<svg style="left:951px;top:3px" width="11" height="11" viewBox="0 0 11 11"><circle cx="4.300" cy="4.300" r="3.400" fill="none" stroke="#222" stroke-width="1.200"/><path d="M6.800 6.800L10 10" stroke="#222" stroke-width="1.400" stroke-linecap="round"/></svg>
<div style="left:974px;top:2px;width:12px;height:12px;border-radius:50%;background:radial-gradient(circle at 50% 50%,#fff 0,#bcd6ff 10%,#5a6cf0 26%,#a23fd0 42%,#2a2f86 58%,#15172c 72%,#0d0d10 100%)"></div>
<svg style="left:994px;top:4px" width="14" height="9" viewBox="0 0 14 9"><path d="M0 1h1.500M0 4.500h1.500M0 8h1.500" stroke="#222" stroke-width="1.500"/><path d="M3.500 1H14M3.500 4.500H14M3.500 8H14" stroke="#222" stroke-width="1.500"/></svg>
</div>

<!-- TITLEBAR -->
<div id="titlebar">
<div style="left:6.300px;top:7.700px;width:8.600px;height:8.600px;border-radius:50%;background:#f25b53"></div>
<div style="left:9.300px;top:10.800px;width:2.400px;height:2.400px;border-radius:50%;background:#7a1610"></div>
<div style="left:20.700px;top:7.700px;width:8.600px;height:8.600px;border-radius:50%;background:#f5b82e"></div>
<div style="left:34.700px;top:7.700px;width:8.600px;height:8.600px;border-radius:50%;background:#2ec63f"></div>
<svg style="left:56px;top:6px" width="13" height="12" viewBox="0 0 13 12"><path d="M6.500 0L0 6h1.800v6h3.400V8h2.600v4h3.400V6H13z" fill="#c9c9c9"/></svg>
<span class="t" style="left:351px;top:6.500px;font-size:9.400px;color:#e6e6e6">Adobe InDesign 2020</span>
<div style="left:722.500px;top:2.300px;width:86.500px;height:18.600px;border:1px solid #d8d8d8;border-radius:10px"></div>
<svg style="left:730.500px;top:6.500px" width="9" height="10" viewBox="0 0 9 10"><path d="M2.500 4H.5v5.500h8V4h-2" fill="none" stroke="#ddd" stroke-width="1"/><path d="M4.500 6.500V.8M2.500 2.600L4.500.6l2 2" fill="none" stroke="#ddd" stroke-width="1"/></svg>
<span class="t" style="left:743.500px;top:7.300px;font-size:8.700px;color:#f0f0f0;font-weight:bold;letter-spacing:-.1px">Publish Online</span>
<svg style="left:819px;top:4px" width="10" height="16" viewBox="0 0 10 16"><path d="M5 .8a4.200 4.200 0 0 0-2.300 7.700c.5.500.8 1.200.8 2v.5h3v-.5c0-.8.300-1.500.8-2A4.200 4.200 0 0 0 5 .8z" fill="none" stroke="#bdbdbd" stroke-width="1"/><path d="M3.500 12.500h3M3.800 14.200h2.400" stroke="#bdbdbd" stroke-width="1"/></svg>
<div style="left:838px;top:5px;width:1px;height:15px;background:#5e5e5e"></div>
<span class="t" style="left:849px;top:7px;font-size:9.200px;color:#eee;font-weight:bold">Essentials</span>
<svg style="left:899px;top:10px" width="7" height="5" viewBox="0 0 7 5"><path d="M.5.800L3.500 3.800 6.500.8" fill="none" stroke="#ddd" stroke-width="1.100"/></svg>
<div style="left:920px;top:5px;width:93px;height:14px;background:#3f3f3f;border:1px solid #6a6a6a;border-radius:2px"></div>
<svg style="left:923px;top:8px" width="12" height="9" viewBox="0 0 12 9"><circle cx="3.300" cy="3.300" r="2.600" fill="none" stroke="#ccc" stroke-width="1"/><path d="M5.200 5.200L7.500 7.800" stroke="#ccc" stroke-width="1.100"/><path d="M8 3l1.600 1.600L11.200 3" fill="none" stroke="#ccc" stroke-width=".9"/></svg>
<span class="t" style="left:940px;top:8.500px;font-size:7.600px;color:#808080">Adobe Stock</span>
</div>

<!-- TABBAR -->
<div id="tabbar"><div id="doctab"><span class="t" style="left:-3px;top:6.500px;font-size:7.700px;font-weight:bold;color:#f0f0f0;letter-spacing:-.05px">Everyday Every 25 May.indd @ 60% [GPU Preview]</span></div></div>

<!-- RULER -->
<div id="ruler">
<i style="left:-15.2px"></i><span class="t" style="left:-13.1px">20</span>
<i style="left:6.4px"></i><span class="t" style="left:8.5px">10</span>
<i style="left:28.0px"></i><span class="t" style="left:30.1px">0</span>
<i style="left:49.6px"></i><span class="t" style="left:51.7px">10</span>
<i style="left:71.2px"></i><span class="t" style="left:73.3px">20</span>
<i style="left:92.8px"></i><span class="t" style="left:94.9px">30</span>
<i style="left:114.4px"></i><span class="t" style="left:116.5px">40</span>
<i style="left:135.9px"></i><span class="t" style="left:138.0px">50</span>
<i style="left:157.5px"></i><span class="t" style="left:159.6px">60</span>
<i style="left:179.1px"></i><span class="t" style="left:181.2px">70</span>
<i style="left:200.7px"></i><span class="t" style="left:202.8px">80</span>
<i style="left:222.3px"></i><span class="t" style="left:224.4px">90</span>
<i style="left:243.9px"></i><span class="t" style="left:246.0px">100</span>
<i style="left:265.5px"></i><span class="t" style="left:267.6px">110</span>
<i style="left:287.1px"></i><span class="t" style="left:289.2px">120</span>
<i style="left:308.7px"></i><span class="t" style="left:310.8px">130</span>
<i style="left:330.3px"></i><span class="t" style="left:332.4px">140</span>
<i style="left:351.9px"></i><span class="t" style="left:354.0px">150</span>
<i style="left:373.4px"></i><span class="t" style="left:375.5px">160</span>
<i style="left:395.0px"></i><span class="t" style="left:397.1px">170</span>
<i style="left:416.6px"></i><span class="t" style="left:418.7px">180</span>
<i style="left:438.2px"></i><span class="t" style="left:440.3px">190</span>
<i style="left:459.8px"></i><span class="t" style="left:461.9px">200</span>
<i style="left:481.4px"></i><span class="t" style="left:483.5px">210</span>
<i style="left:503.0px"></i><span class="t" style="left:505.1px">220</span>
<i style="left:524.6px"></i><span class="t" style="left:526.7px">230</span>
<i style="left:546.2px"></i><span class="t" style="left:548.3px">240</span>
<i style="left:567.8px"></i><span class="t" style="left:569.9px">250</span>
<i style="left:589.3px"></i><span class="t" style="left:591.4px">260</span>
<i style="left:610.9px"></i><span class="t" style="left:613.0px">270</span>
<i style="left:632.5px"></i><span class="t" style="left:634.6px">280</span>
<i style="left:654.1px"></i><span class="t" style="left:656.2px">290</span>
<i style="left:675.7px"></i><span class="t" style="left:677.8px">300</span>
<i style="left:697.3px"></i><span class="t" style="left:699.4px">310</span>
<i style="left:718.9px"></i><span class="t" style="left:721.0px">320</span>
<i style="left:740.5px"></i><span class="t" style="left:742.6px">330</span>
<i style="left:762.1px"></i><span class="t" style="left:764.2px">340</span>
<i style="left:783.6px"></i><span class="t" style="left:785.7px">350</span>
<i style="left:805.2px"></i><span class="t" style="left:807.3px">360</span>
<div style="left:2.09px;top:10px;width:803px;height:1px;background:repeating-linear-gradient(90deg,#5c5c5c 0,#5c5c5c 1px,transparent 1px,transparent 2.159px)"></div>
<div style="left:-4.38px;top:9px;width:830px;height:1px;background:repeating-linear-gradient(90deg,#5c5c5c 0,#5c5c5c 1px,transparent 1px,transparent 21.59px)"></div>
</div>

<!-- PASTEBOARD -->
<div id="paste">
<div style="left:29px;top:20px;width:734px;height:453px;background:#000"></div>
<div id="page" style="left:28px;top:19px;width:734px;height:453px;background:#1e2446;border:1px solid #0a4476;box-shadow:inset 0 0 0 1px #181c38"></div>
<div style="left:394px;top:20px;width:1px;height:451px;background:#0c3c6a"></div>
<div style="left:395px;top:20px;width:1px;height:451px;background:#1a1f3d"></div>
<div id="tframe" style="left:422px;top:163px;width:313px;height:87px;border:1px solid #18518f"></div>
<div style="left:731px;top:235px;width:7px;height:7px;background:#fff;box-shadow:0 0 0 .5px rgba(190,120,110,.55)"></div>
<div style="left:733px;top:238px;width:3px;height:1px;background:#f5a3a3"></div>
<div style="left:734px;top:237px;width:1px;height:3px;background:#f5a3a3"></div>
<span class="t q" style="left:422px;top:178px;width:313px;text-align:center;font-size:13.600px;color:#0a0c18;letter-spacing:-.34px;-webkit-text-stroke:.25px #0a0c18">“One must live to build one’s house and not</span>
<span class="t q" style="left:422px;top:194.500px;width:313px;text-align:center;font-size:13.600px;color:#0a0c18;letter-spacing:-.34px;-webkit-text-stroke:.25px #0a0c18">build one’s house to live in.”</span>
<span class="t q" style="left:422px;top:223.500px;width:313px;text-align:center;font-size:10.300px;color:#0a0c18;letter-spacing:-.28px;-webkit-text-stroke:.2px #0a0c18">- Gaston Bachelard</span>
</div>

<!-- VSCROLL -->
<div id="vscroll">
<svg style="left:2.500px;top:2px" width="7" height="5" viewBox="0 0 7 5"><path d="M.5 4L3.500 1 6.500 4" fill="none" stroke="#a8a8a8" stroke-width="1"/></svg>
<div style="left:1.500px;top:25px;width:9px;height:17px;border-radius:4.500px;background:#707070"></div>
<svg style="left:2.500px;top:512px" width="7" height="5" viewBox="0 0 7 5"><path d="M.5 1L3.500 4 6.500 1" fill="none" stroke="#a8a8a8" stroke-width="1"/></svg>
</div>

<!-- STATUS -->
<div id="status">
<span class="t" style="left:10px">60.19%</span>
<svg style="left:40.200px;top:4px" width="7" height="5" viewBox="0 0 7 5"><path d="M.5.800L3.500 3.800 6.500.8" fill="none" stroke="#ccc" stroke-width="1"/></svg>
<svg style="left:54px;top:3px" width="7" height="7" viewBox="0 0 7 7"><path d="M1 0v7" stroke="#ccc" stroke-width="1.200"/><path d="M6.500 0v7L2.500 3.500z" fill="#ccc"/></svg>
<svg style="left:70px;top:3px" width="5" height="7" viewBox="0 0 5 7"><path d="M4.500 0v7L.5 3.500z" fill="#ccc"/></svg>
<div style="left:85px;top:1px;width:63px;height:10px;background:#404040;border:1px solid #666;border-radius:1px"></div>
<span class="t" style="left:88px">2</span>
<div style="left:134px;top:1px;width:1px;height:10px;background:#666"></div>
<svg style="left:138px;top:4px" width="7" height="5" viewBox="0 0 7 5"><path d="M.5.800L3.500 3.800 6.500.8" fill="none" stroke="#ccc" stroke-width="1"/></svg>
<svg style="left:157px;top:3px" width="5" height="7" viewBox="0 0 5 7"><path d="M.5 0v7L4.500 3.500z" fill="#ccc"/></svg>
<svg style="left:170px;top:3px" width="7" height="7" viewBox="0 0 7 7"><path d="M6 0v7" stroke="#ccc" stroke-width="1.200"/><path d="M.5 0v7L4.500 3.500z" fill="#ccc"/></svg>
<svg style="left:189px;top:2px" width="11" height="9" viewBox="0 0 11 9"><path d="M1 8V4.500A3.500 3.500 0 0 1 8 4.500V8H6V5H4.500" fill="none" stroke="#bbb" stroke-width="1.300"/><path d="M9 8.500h2l-1 .9z" fill="#bbb"/></svg>
<span class="t" style="left:211px;transform:scaleX(.96);transform-origin:left">[Basic] (working)</span>
<svg style="left:283px;top:4px" width="7" height="5" viewBox="0 0 7 5"><path d="M.5.800L3.500 3.800 6.500.8" fill="none" stroke="#ccc" stroke-width="1"/></svg>
<div style="left:300.500px;top:2.500px;width:7px;height:7px;border-radius:50%;background:#ee2c25"></div>
<span class="t" style="left:312px">3 errors</span>
<svg style="left:356px;top:4px" width="7" height="5" viewBox="0 0 7 5"><path d="M.5.800L3.500 3.800 6.500.8" fill="none" stroke="#ccc" stroke-width="1"/></svg>
<div id="hscroll" style="left:366px;top:0;width:448px;height:12px;background:#4a4a4a"></div>
<svg style="left:370px;top:3px" width="4" height="7" viewBox="0 0 4 7"><path d="M3.500.5L.8 3.500 3.500 6.500" fill="none" stroke="#999" stroke-width="1"/></svg>
<div style="left:471px;top:1.500px;width:237px;height:9px;border-radius:4.500px;background:#686868"></div>
<svg style="left:807px;top:3px" width="4" height="7" viewBox="0 0 4 7"><path d="M.5.500L3.200 3.500.5 6.500" fill="none" stroke="#aaa" stroke-width="1"/></svg>
<div style="left:818px;top:2px;width:12px;height:8px;border:1px solid #ccc"></div>
<div style="left:823.500px;top:2px;width:1px;height:8px;background:#ccc"></div>
<div style="left:831px;top:0;width:12px;height:12px;background:#4a4a4a"></div>
<svg style="left:833px;top:2px" width="9" height="9" viewBox="0 0 9 9"><path d="M8 1v1M8 3v1M8 5v1M8 7v1M6 3v1M6 5v1M6 7v1M4 5v1M4 7v1M2 7v1" stroke="#686868" stroke-width="1"/></svg>
</div>

<div style="left:0;top:40px;width:28px;height:541px;background:#5f5f5f"></div>
<div style="left:0;top:40px;width:1px;height:468px;background:#3e3e3e"></div>
<!-- VRULER -->
<div id="vruler">
<div style="left:0;top:-26.3px;width:11px;height:1px;background:#484848"></div>
<span class="t" style="left:2.300px;top:-24.7px;font-size:7.200px;color:#fff;width:6px;height:7px;text-align:center;transform:scaleX(1.15);-webkit-text-stroke:.2px #fff">1</span>
<span class="t" style="left:2.300px;top:-18.4px;font-size:7.200px;color:#fff;width:6px;height:7px;text-align:center;transform:scaleX(1.15);-webkit-text-stroke:.2px #fff">8</span>
<span class="t" style="left:2.300px;top:-12.1px;font-size:7.200px;color:#fff;width:6px;height:7px;text-align:center;transform:scaleX(1.15);-webkit-text-stroke:.2px #fff">0</span>
<div style="left:0;top:-4.7px;width:11px;height:1px;background:#484848"></div>
<span class="t" style="left:2.300px;top:-3.1px;font-size:7.200px;color:#fff;width:6px;height:7px;text-align:center;transform:scaleX(1.15);-webkit-text-stroke:.2px #fff">1</span>
<span class="t" style="left:2.300px;top:3.2px;font-size:7.200px;color:#fff;width:6px;height:7px;text-align:center;transform:scaleX(1.15);-webkit-text-stroke:.2px #fff">9</span>
<span class="t" style="left:2.300px;top:9.5px;font-size:7.200px;color:#fff;width:6px;height:7px;text-align:center;transform:scaleX(1.15);-webkit-text-stroke:.2px #fff">0</span>
<div style="left:0;top:16.9px;width:11px;height:1px;background:#484848"></div>
<span class="t" style="left:2.300px;top:18.5px;font-size:7.200px;color:#fff;width:6px;height:7px;text-align:center;transform:scaleX(1.15);-webkit-text-stroke:.2px #fff">2</span>
<span class="t" style="left:2.300px;top:24.8px;font-size:7.200px;color:#fff;width:6px;height:7px;text-align:center;transform:scaleX(1.15);-webkit-text-stroke:.2px #fff">0</span>
<span class="t" style="left:2.300px;top:31.1px;font-size:7.200px;color:#fff;width:6px;height:7px;text-align:center;transform:scaleX(1.15);-webkit-text-stroke:.2px #fff">0</span>
<div style="left:0;top:38.5px;width:11px;height:1px;background:#484848"></div>
<span class="t" style="left:2.300px;top:40.1px;font-size:7.200px;color:#fff;width:6px;height:7px;text-align:center;transform:scaleX(1.15);-webkit-text-stroke:.2px #fff">2</span>
<span class="t" style="left:2.300px;top:46.4px;font-size:7.200px;color:#fff;width:6px;height:7px;text-align:center;transform:scaleX(1.15);-webkit-text-stroke:.2px #fff">1</span>
<span class="t" style="left:2.300px;top:52.7px;font-size:7.200px;color:#fff;width:6px;height:7px;text-align:center;transform:scaleX(1.15);-webkit-text-stroke:.2px #fff">0</span>
<div style="left:0;top:60.1px;width:11px;height:1px;background:#484848"></div>
<span class="t" style="left:2.300px;top:61.7px;font-size:7.200px;color:#fff;width:6px;height:7px;text-align:center;transform:scaleX(1.15);-webkit-text-stroke:.2px #fff">2</span>
<span class="t" style="left:2.300px;top:68.0px;font-size:7.200px;color:#fff;width:6px;height:7px;text-align:center;transform:scaleX(1.15);-webkit-text-stroke:.2px #fff">2</span>
<span class="t" style="left:2.300px;top:74.3px;font-size:7.200px;color:#fff;width:6px;height:7px;text-align:center;transform:scaleX(1.15);-webkit-text-stroke:.2px #fff">0</span>
<div style="left:10px;top:0;width:1px;height:74px;background:repeating-linear-gradient(180deg,#4c4c4c 0,#4c4c4c 1px,transparent 1px,transparent 2.159px)"></div>
</div>

<!-- TOOLS -->
<div id="tools">
<div style="left:0;top:0;width:27px;height:9.500px;background:#484848"></div>
<svg style="left:3.2px;top:3px" width="5" height="5" viewBox="0 0 5 5"><path d="M.3.300L4.700 4.700M4.700.3L.3 4.700" stroke="#c4c4c4" stroke-width=".9"/></svg>
<svg style="left:17px;top:3.2px" width="6" height="4" viewBox="0 0 6 4"><path d="M.4.300L2.200 2 .4 3.700M3.400.3L5.200 2 3.400 3.700" fill="none" stroke="#aaa" stroke-width=".8"/></svg>
<div style="left:6px;top:12px;width:14px;height:3px;background:repeating-linear-gradient(90deg,#444 0,#444 1.800px,transparent 1.800px,transparent 2.800px)"></div>
<div style="left:3.4px;top:20.7px;width:19.400px;height:14.800px;background:#3a3a3a;border-radius:2px"></div>
<svg style="left:9px;top:22px" width="10" height="13" viewBox="0 0 10 13"><path d="M1 .8V11.500L3.800 8.300 9 7.200z" fill="none" stroke="#cdcdcd" stroke-width="1" stroke-linejoin="miter"/></svg>
<svg style="left:9px;top:39.5px" width="10" height="13" viewBox="0 0 10 13"><path d="M.5 0V12.200L3.800 8.500 9.500 7.200z" fill="#cdcdcd"/></svg>
<svg style="left:9px;top:57px" width="11" height="11" viewBox="0 0 11 11"><path d="M.5.500H5.500L8 3V6M8 9.500H.5V.5M5.500.5V3H8" fill="none" stroke="#cdcdcd" stroke-width="1"/><path d="M6.800 5.800V10.800L10.500 8.300z" fill="#cdcdcd"/></svg>
<svg style="left:6.8px;top:74px" width="13" height="11" viewBox="0 0 13 11"><path d="M.6 0V11M12.400 0V11" stroke="#cdcdcd" stroke-width="1.200"/><path d="M2.500 5.500H10.500" stroke="#cdcdcd" stroke-width="1"/><path d="M4.500 3.300L2.200 5.500 4.500 7.700zM8.500 3.300L10.800 5.500 8.500 7.700z" fill="#cdcdcd"/></svg>
<svg style="left:8px;top:90.5px" width="11" height="12" viewBox="0 0 11 12"><path d="M.6 5V11.400H10.400V5" fill="none" stroke="#cdcdcd" stroke-width="1.200"/><path d="M2 9.500h7" stroke="#cdcdcd" stroke-width="1.600" stroke-dasharray="1.200 .8"/><path d="M2.500.8L6 4.300M6.300 1.800V4.600H3.500" fill="none" stroke="#cdcdcd" stroke-width="1.100"/></svg>
<svg style="left:19.7px;top:100.7px" width="3" height="3" viewBox="0 0 3 3"><path d="M3 0V3H0z" fill="#c8c8c8"/></svg>
<span class="t" style="left:7.800px;top:107.300px;font-family:'Liberation Serif',serif;font-weight:bold;font-size:15.500px;color:#cdcdcd;line-height:1;transform:scaleX(1.02);transform-origin:left">T</span>
<svg style="left:19.7px;top:119.8px" width="3" height="3" viewBox="0 0 3 3"><path d="M3 0V3H0z" fill="#c8c8c8"/></svg>
<svg style="left:8px;top:127px" width="11" height="11" viewBox="0 0 11 11"><path d="M.3 10.700L10.700.3" stroke="#cdcdcd" stroke-width="1"/></svg>
<svg style="left:7px;top:143.5px" width="13" height="13" viewBox="0 0 13 13"><path d="M.5 12.500L2 6.500 6 3.500 9.500 7 6.500 11z" fill="#cdcdcd"/><path d="M7.200 2.300L9 .5 12.500 4 10.700 5.800z" fill="#cdcdcd"/><path d="M.8 12.200L5 8" stroke="#535353" stroke-width=".9"/><circle cx="5.300" cy="7.700" r=".9" fill="#535353"/></svg>
<svg style="left:19.7px;top:154.3px" width="3" height="3" viewBox="0 0 3 3"><path d="M3 0V3H0z" fill="#c8c8c8"/></svg>
<svg style="left:7px;top:161px" width="13" height="13" viewBox="0 0 13 13"><path d="M.3 12.700L1.600 8.600 8 2.200 10.800 5 4.400 11.400z" fill="#cdcdcd"/><path d="M8.800 1.400L10 .2 12.800 3 11.600 4.200z" fill="#cdcdcd"/><path d="M.3 12.700l1-.3-.7-.7z" fill="#535353"/></svg>
<svg style="left:19.7px;top:171.5px" width="3" height="3" viewBox="0 0 3 3"><path d="M3 0V3H0z" fill="#c8c8c8"/></svg>
<svg style="left:7.3px;top:179px" width="12" height="11" viewBox="0 0 12 11"><rect x=".5" y=".5" width="11" height="10" fill="none" stroke="#cdcdcd" stroke-width="1"/><path d="M.5.500L11.500 10.500M11.500.5L.5 10.500" stroke="#cdcdcd" stroke-width="1"/></svg>
<svg style="left:19.7px;top:188.5px" width="3" height="3" viewBox="0 0 3 3"><path d="M3 0V3H0z" fill="#c8c8c8"/></svg>
<svg style="left:7.3px;top:196px" width="12" height="11" viewBox="0 0 12 11"><rect x=".5" y=".5" width="11" height="10" fill="#7b7b7b" stroke="#cdcdcd" stroke-width="1"/></svg>
<svg style="left:19.7px;top:205.7px" width="3" height="3" viewBox="0 0 3 3"><path d="M3 0V3H0z" fill="#c8c8c8"/></svg>
<svg style="left:7.3px;top:214px" width="13" height="12" viewBox="0 0 13 12"><path d="M.5 2.500L9.800 8.600M.5 9.500L9.800 3.400" stroke="#cdcdcd" stroke-width="1.300"/><circle cx="10.800" cy="2.300" r="1.700" fill="none" stroke="#cdcdcd" stroke-width="1"/><circle cx="10.800" cy="9.700" r="1.700" fill="none" stroke="#cdcdcd" stroke-width="1"/></svg>
<svg style="left:7.5px;top:231px" width="12" height="13" viewBox="0 0 12 13"><path d="M3.500 2.300A5 5 0 1 1 1.300 9" fill="none" stroke="#cdcdcd" stroke-width="1"/><path d="M1.300 9A5 5 0 0 1 1.200 5.500" fill="none" stroke="#cdcdcd" stroke-width="1" stroke-dasharray="1 1"/><path d="M1 2.800L4.800.3V5z" fill="#cdcdcd"/></svg>
<svg style="left:19.7px;top:241.7px" width="3" height="3" viewBox="0 0 3 3"><path d="M3 0V3H0z" fill="#c8c8c8"/></svg>
<div style="left:7.3px;top:249px;width:12px;height:11px;border:1px solid #c2c2c2;background:linear-gradient(90deg,#d9d9d9,#444)"></div>
<div style="left:7.3px;top:266px;width:12px;height:11px;border:1px solid #aaa;background:linear-gradient(180deg,#666 0,#777 30%,#cfcfcf 100%)"></div>
<div style="left:9.5px;top:268px;width:7.500px;height:2.500px;background:#555;border-radius:0 0 3px 3px"></div>
<svg style="left:8px;top:285px" width="11" height="11" viewBox="0 0 11 11"><path d="M0 0H11V8L8 11H0z" fill="#cdcdcd"/><path d="M2 3h7M2 5.500h7M2 8h4" stroke="#4a4a4a" stroke-width=".9"/><path d="M8 11V8h3z" fill="#7d7d7d"/></svg>
<svg style="left:7px;top:301.5px" width="13" height="13" viewBox="0 0 13 13"><path d="M1 12L1.800 9.500 7.500 3.800 9.200 5.500 3.500 11.200z" fill="none" stroke="#cdcdcd" stroke-width="1"/><path d="M7 2.500L10.500 6M8.300 3.300L10 1.300a1.300 1.300 0 0 1 1.800 1.800L9.800 4.800" stroke="#cdcdcd" stroke-width="1.600" fill="#cdcdcd"/></svg>
<svg style="left:19.7px;top:311.8px" width="3" height="3" viewBox="0 0 3 3"><path d="M3 0V3H0z" fill="#c8c8c8"/></svg>
<svg style="left:7.3px;top:318.5px" width="13" height="12" viewBox="0 0 13 12"><rect x="3.200" y="1.800" width="1.500" height="6" rx=".75" fill="#cdcdcd"/><rect x="5.200" y=".4" width="1.500" height="7" rx=".75" fill="#cdcdcd"/><rect x="7.200" y=".8" width="1.500" height="7" rx=".75" fill="#cdcdcd"/><rect x="9.200" y="2.400" width="1.500" height="6" rx=".75" fill="#cdcdcd"/><path d="M3.200 6.200h7.500v2.300c0 1.800-1 3.300-2.200 3.300H5.800C4.800 11.800 3.800 10.600 3.200 9.300z" fill="#cdcdcd"/><path d="M.4 6.300c-.4-.8.700-1.500 1.300-.8L3.600 7.600 4 10.500z" fill="#cdcdcd"/></svg>
<svg style="left:7.3px;top:335.5px" width="13" height="13" viewBox="0 0 13 13"><circle cx="5" cy="5" r="4" fill="none" stroke="#cdcdcd" stroke-width="1.100"/><path d="M8 8L12 12" stroke="#cdcdcd" stroke-width="1.600" stroke-linecap="round"/></svg>
<div style="left:3px;top:354px;width:5px;height:5px;background:#fff;border:.5px solid #222"></div>
<svg style="left:3px;top:354px" width="5" height="5" viewBox="0 0 5 5"><path d="M0 0L5 5" stroke="#e0231c" stroke-width="1.200"/></svg>
<div style="left:5.5px;top:356.5px;width:5px;height:5px;border:1.200px solid #111;outline:.5px solid #ddd"></div>
<svg style="left:16px;top:356px" width="8" height="8" viewBox="0 0 8 8"><path d="M2 1.500h3.500v4" fill="none" stroke="#c8c8c8" stroke-width="1"/><path d="M2.500 0L.5 1.500 2.500 3zM4 5L5.500 7.500 7 5z" fill="#c8c8c8"/></svg>
<div style="left:10.3px;top:373.3px;width:13.500px;height:13.200px;background:#000"></div>
<div style="left:14.5px;top:377.5px;width:5px;height:5px;background:#4a4a4a"></div>
<div style="left:2.5px;top:366.5px;width:14.500px;height:14px;background:#fdfce6"></div>
<div style="left:3.600px;top:392.300px;width:9.500px;height:9px;background:#3c3c3c;border-radius:1.500px"></div>
<div style="left:5.500px;top:394px;width:6px;height:5.500px;border:1px solid #bdbdbd"></div>
<span class="t" style="left:16.800px;top:392.800px;font-family:'Liberation Serif',serif;font-weight:bold;font-size:9px;color:#d6d6d6">T</span>
<div style="left:3.3px;top:406px;width:19.500px;height:15.500px;background:#3a3a3a;border-radius:2px"></div>
<div style="left:7.3px;top:408.8px;width:11.500px;height:9.500px;background:#fdfce6;border:.5px solid #c8c8b8"></div>
<svg style="left:19.7px;top:418.0px" width="3" height="3" viewBox="0 0 3 3"><path d="M3 0V3H0z" fill="#c8c8c8"/></svg>
<svg style="left:9px;top:429px" width="10" height="9" viewBox="0 0 10 9"><path d="M.5 8.500V2.500" stroke="#cdcdcd" stroke-width="1" stroke-dasharray="1 1"/><path d="M2 .5H9" stroke="#cdcdcd" stroke-width="1" stroke-dasharray="1 1"/><rect x="3" y="3.500" width="6.500" height="4.500" fill="#cdcdcd"/></svg>
<svg style="left:19.7px;top:439.0px" width="3" height="3" viewBox="0 0 3 3"><path d="M3 0V3H0z" fill="#c8c8c8"/></svg>
<div style="left:3.3px;top:447.3px;width:19.500px;height:15.500px;background:#3a3a3a;border-radius:2px"></div>
<svg style="left:9.3px;top:451px" width="9" height="8" viewBox="0 0 9 8"><rect x=".5" y=".5" width="8" height="7" fill="#9a9a9a" stroke="#d0d0d0" stroke-width="1"/><rect x="2.500" y="2.500" width="4" height="3" fill="none" stroke="#444" stroke-width=".8"/></svg>
<svg style="left:19.7px;top:459.5px" width="3" height="3" viewBox="0 0 3 3"><path d="M3 0V3H0z" fill="#c8c8c8"/></svg>
</div>

<!-- PANEL -->
<div id="panel">
<div style="left:0;top:0;width:181px;height:9.500px;background:#454545"></div>
<svg style="left:168px;top:3px" width="7" height="5" viewBox="0 0 7 5"><path d="M.5.500L2.500 2.500.5 4.500M4 .5L6 2.500 4 4.500" fill="none" stroke="#9a9a9a" stroke-width=".9"/></svg>
<div style="left:0;top:9.500px;width:181px;height:19px;background:#424242"></div>
<div style="left:0;top:9.500px;width:58px;height:19px;background:#535353"></div>
<div style="left:93px;top:9.500px;width:1px;height:19px;background:#3a3a3a"></div>
<div style="left:152px;top:9.500px;width:1px;height:19px;background:#3a3a3a"></div>
<span class="t" style="left:8.5px;top:15.5px;font-weight:bold;font-size:8.400px;color:#fff;transform:scaleX(0.976);transform-origin:left">Properties</span>
<span class="t" style="left:66px;top:15.5px;font-weight:bold;font-size:8.400px;color:#c4c4c4;transform:scaleX(0.927);transform-origin:left">Pages</span>
<span class="t" style="left:101px;top:15.5px;font-weight:bold;font-size:8.400px;color:#c4c4c4;transform:scaleX(0.980);transform-origin:left">CC Libraries</span>
<span class="t" style="left:7px;top:37px;transform:scaleX(0.934);transform-origin:left">No Selection</span>
<div class="hr" style="top:52.5px"></div>
<span class="t" style="left:7px;top:61.5px;transform:scaleX(0.964);transform-origin:left">Document</span>
<div class="fld" style="left:7px;top:76.5px;width:67px;height:15px"></div>
<span class="t" style="left:10px;top:80.3px;transform:scaleX(0.966);transform-origin:left">[Custom]</span>
<svg style="left:64px;top:82px" width="7" height="5" viewBox="0 0 7 5"><path d="M.5.800L3.500 3.800 6.500.8" fill="none" stroke="#d8d8d8" stroke-width="1"/></svg>
<div style="left:97.5px;top:76.5px;width:15.500px;height:15.500px;background:#2b2b2b;border-radius:1.500px"></div>
<svg style="left:100px;top:78.5px" width="11" height="12" viewBox="0 0 11 12"><rect x=".5" y=".5" width="10" height="11" fill="none" stroke="#d6d6d6" stroke-width="1"/><circle cx="5.500" cy="3.600" r="1.500" fill="#d6d6d6"/><path d="M3.200 11V6.500h4.600V11z" fill="#d6d6d6"/></svg>
<svg style="left:119px;top:78.5px" width="10" height="12" viewBox="0 0 10 12"><rect x=".5" y=".5" width="9" height="11" fill="none" stroke="#cfcfcf" stroke-width="1"/><circle cx="3" cy="6" r="1.200" fill="#cfcfcf"/><path d="M5 3.500h4v5H5z" fill="#cfcfcf"/></svg>
<span class="t" style="left:11px;top:103.5px">W:</span>
<div class="fld" style="left:21.5px;top:100.5px;width:52.5px;height:14.500px"></div><svg style="left:24.5px;top:102.25px" width="7" height="11" viewBox="0 0 7 11"><path d="M1 3.600L3.500 1.200 6 3.600M1 7.400L3.500 9.800 6 7.400" fill="none" stroke="#cfcfcf" stroke-width=".9"/></svg><div style="left:34.0px;top:100.5px;width:1px;height:14px;background:#6b6b6b"></div><span class="t" style="left:38.5px;top:104.0px;transform:scaleX(0.993);transform-origin:left">170 mm</span>
<span class="t" style="left:12.5px;top:122px">H:</span>
<div class="fld" style="left:21.5px;top:118.8px;width:52.5px;height:14.500px"></div><svg style="left:24.5px;top:120.55px" width="7" height="11" viewBox="0 0 7 11"><path d="M1 3.600L3.500 1.200 6 3.600M1 7.400L3.500 9.800 6 7.400" fill="none" stroke="#cfcfcf" stroke-width=".9"/></svg><div style="left:34.0px;top:118.8px;width:1px;height:14px;background:#6b6b6b"></div><span class="t" style="left:38.5px;top:122.3px;transform:scaleX(0.993);transform-origin:left">210 mm</span>
<svg style="left:96.5px;top:100px" width="13" height="14" viewBox="0 0 13 14"><path d="M0 11V6C0 3.500 2.500 2.500 5.800 2.500V11zM13 11V6C13 3.500 10.500 2.500 7.200 2.500V11z" fill="#cfcfcf"/><path d="M6.500 0V14" stroke="#cfcfcf" stroke-width="1"/></svg>
<div class="fld" style="left:114px;top:100.5px;width:49px;height:14.500px;background:#3f3f3f"></div>
<span class="t" style="left:118px;top:104px">74</span>
<div style="left:97.7px;top:122px;width:8.500px;height:8.500px;background:#d4d4d4;border-radius:1.500px"></div>
<svg style="left:98.7px;top:123.2px" width="7" height="6" viewBox="0 0 7 6"><path d="M.8 3L2.800 5 6.200.8" fill="none" stroke="#3a3a3a" stroke-width="1.300"/></svg>
<span class="t" style="left:111px;top:123px;transform:scaleX(0.888);transform-origin:left">Facing Pages</span>
<span class="t" style="left:7px;top:142px;transform:scaleX(0.947);transform-origin:left">Margins</span>
<svg style="left:8px;top:157.5px" width="12" height="12" viewBox="0 0 12 12"><rect x="0" y="0" width="12" height="3.500" fill="#cfcfcf"/><rect x=".5" y="5.500" width="11" height="6" fill="none" stroke="#cfcfcf" stroke-width="1"/></svg>
<div class="fld" style="left:20.5px;top:156.2px;width:53.5px;height:14.500px"></div><svg style="left:24.5px;top:157.95px" width="7" height="11" viewBox="0 0 7 11"><path d="M1 3.600L3.500 1.200 6 3.600M1 7.400L3.500 9.800 6 7.400" fill="none" stroke="#cfcfcf" stroke-width=".9"/></svg><div style="left:34.0px;top:156.2px;width:1px;height:14px;background:#6b6b6b"></div><span class="t" style="left:37.800px;top:159.7px;transform:scaleX(0.984);transform-origin:left">12.7 mm</span>
<svg style="left:8px;top:176px" width="12" height="12" viewBox="0 0 12 12"><rect x="0" y="8.500" width="12" height="3.500" fill="#cfcfcf"/><rect x=".5" y=".5" width="11" height="6" fill="none" stroke="#cfcfcf" stroke-width="1"/></svg>
<div class="fld" style="left:20.5px;top:174.9px;width:53.5px;height:14.500px"></div><svg style="left:24.5px;top:176.65px" width="7" height="11" viewBox="0 0 7 11"><path d="M1 3.600L3.500 1.200 6 3.600M1 7.400L3.500 9.800 6 7.400" fill="none" stroke="#cfcfcf" stroke-width=".9"/></svg><div style="left:34.0px;top:174.9px;width:1px;height:14px;background:#6b6b6b"></div><span class="t" style="left:37.800px;top:178.4px;transform:scaleX(0.984);transform-origin:left">12.7 mm</span>
<svg style="left:80.5px;top:166px" width="10" height="13" viewBox="0 0 10 13"><g transform="rotate(-22 5 6.500)"><rect x="3" y="1" width="4" height="5" rx="2" fill="none" stroke="#c4c4c4" stroke-width="1"/><rect x="3" y="7" width="4" height="5" rx="2" fill="none" stroke="#c4c4c4" stroke-width="1"/></g><path d="M1.500 1.800L8.500 11.200" stroke="#c4c4c4" stroke-width="1"/></svg>
<svg style="left:97px;top:157.5px" width="13" height="12" viewBox="0 0 13 12"><rect x=".5" y="2" width="7" height="8" fill="none" stroke="#cfcfcf" stroke-width="1"/><path d="M9.500 2.500L12.500 0V12L9.500 9.500z" fill="#cfcfcf"/></svg>
<div class="fld" style="left:111px;top:156.2px;width:52.5px;height:14.500px"></div><svg style="left:114.0px;top:157.95px" width="7" height="11" viewBox="0 0 7 11"><path d="M1 3.600L3.500 1.200 6 3.600M1 7.400L3.500 9.800 6 7.400" fill="none" stroke="#cfcfcf" stroke-width=".9"/></svg><div style="left:123.5px;top:156.2px;width:1px;height:14px;background:#6b6b6b"></div><span class="t" style="left:128px;top:159.7px;transform:scaleX(0.984);transform-origin:left">12.7 mm</span>
<svg style="left:97px;top:176px" width="13" height="12" viewBox="0 0 13 12"><rect x="5.500" y="2" width="7" height="8" fill="none" stroke="#cfcfcf" stroke-width="1"/><path d="M0 0H3V12H0z" fill="#cfcfcf"/><path d="M12.500 0V12" stroke="#cfcfcf" stroke-width="1"/></svg>
<div class="fld" style="left:111px;top:174.9px;width:52.5px;height:14.500px"></div><svg style="left:114.0px;top:176.65px" width="7" height="11" viewBox="0 0 7 11"><path d="M1 3.600L3.500 1.200 6 3.600M1 7.400L3.500 9.800 6 7.400" fill="none" stroke="#cfcfcf" stroke-width=".9"/></svg><div style="left:123.5px;top:174.9px;width:1px;height:14px;background:#6b6b6b"></div><span class="t" style="left:128px;top:178.4px;transform:scaleX(0.984);transform-origin:left">12.7 mm</span>
<div class="btn" style="left:7px;top:200.5px;width:156.500px;height:14.500px"></div>
<span class="t" style="left:7px;top:204px;width:156.500px;text-align:center;transform:scaleX(0.981);transform-origin:center">Adjust Layout</span>
<div class="hr" style="top:218.5px"></div>
<span class="t" style="left:7px;top:227.7px;transform:scaleX(0.866);transform-origin:left">Page</span>
<div class="fld" style="left:7px;top:242.5px;width:67px;height:14.500px"></div>
<div style="left:8px;top:243.5px;width:52px;height:12.500px;background:#3e3e3e"></div>
<div style="left:60px;top:242.5px;width:1px;height:14.500px;background:#6b6b6b"></div>
<span class="t" style="left:10.5px;top:246px">2</span>
<svg style="left:64px;top:247.5px" width="7" height="5" viewBox="0 0 7 5"><path d="M.5.800L3.500 3.800 6.500.8" fill="none" stroke="#d8d8d8" stroke-width="1"/></svg>
<svg style="left:130.4px;top:246.8px" width="8" height="8" viewBox="0 0 8 8"><rect x=".5" y=".5" width="7" height="7" fill="none" stroke="#cfcfcf" stroke-width="1"/><path d="M4 2v4M2 4h4" stroke="#cfcfcf" stroke-width="1"/></svg>
<svg style="left:149.4px;top:246px" width="8" height="9" viewBox="0 0 8 9"><path d="M0 2h8M3 .5h2v1.500H3z" stroke="#cfcfcf" stroke-width="1" fill="none"/><path d="M1.300 2.500h5.400v6H1.300z" fill="none" stroke="#cfcfcf" stroke-width="1"/><path d="M4 4v3.500" stroke="#cfcfcf" stroke-width="1"/></svg>
<div class="btn" style="left:7px;top:263.2px;width:156.500px;height:14.500px"></div>
<span class="t" style="left:7px;top:266.7px;width:156.500px;text-align:center;transform:scaleX(0.905);transform-origin:center">Edit Page</span>
<div class="hr" style="top:282.3px"></div>
<span class="t" style="left:7px;top:294px;transform:scaleX(0.935);transform-origin:left">Rulers &amp; Grids</span>
<div style="left:93.4px;top:290px;width:16px;height:15.500px;background:#2b2b2b;border-radius:1.500px"></div>
<svg style="left:95.5px;top:292px" width="12" height="12" viewBox="0 0 12 12"><path d="M0 0H12V3H3V12H0z" fill="#d8d8d8"/><path d="M4.500 1.500h1M6.500 1.500h1M8.500 1.500h1M10.500 1.500h.8M1.500 4.500v1M1.500 6.500v1M1.500 8.500v1" stroke="#2b2b2b" stroke-width="1"/></svg>
<svg style="left:122px;top:292px" width="13" height="12" viewBox="0 0 13 12"><rect x=".5" y=".5" width="12" height="11" fill="none" stroke="#c8c8c8" stroke-width="1"/><path d="M1 3.500h11M1 5.500h11M1 7.500h11M1 9.500h11" stroke="#c8c8c8" stroke-width="1" opacity=".62"/></svg>
<svg style="left:149px;top:292.3px" width="12" height="12" viewBox="0 0 12 12"><rect x=".5" y=".5" width="11" height="11" fill="none" stroke="#c8c8c8" stroke-width="1"/><path d="M4.200 0v12M7.800 0v12M0 4.200h12M0 7.800h12" stroke="#c8c8c8" stroke-width="1"/></svg>
<div class="hr" style="top:310.7px"></div>
<span class="t" style="left:7px;top:322.5px;transform:scaleX(0.906);transform-origin:left">Guides</span>
<svg style="left:95px;top:320px" width="12" height="12" viewBox="0 0 12 12"><path d="M3.500 0v12M5.500 0v12M0 4.500h12M0 8.500h12" stroke="#cfcfcf" stroke-width="1"/></svg>
<div style="left:120px;top:318.3px;width:16px;height:15.700px;background:#2b2b2b;border-radius:1.500px"></div>
<svg style="left:122px;top:320px" width="13" height="13" viewBox="0 0 13 13"><path d="M3.500 0v11M5.500 0v11M0 3.500h10M0 7.500h7" stroke="#d8d8d8" stroke-width="1"/><rect x="7.500" y="8" width="5" height="4.500" fill="#d8d8d8"/><path d="M8.500 8V7a1.500 1.500 0 0 1 3 0" fill="none" stroke="#d8d8d8" stroke-width="1"/></svg>
<div style="left:147.3px;top:318.3px;width:16px;height:15.700px;background:#2b2b2b;border-radius:1.500px"></div>
<svg style="left:149px;top:320px" width="13" height="13" viewBox="0 0 13 13"><path d="M3.500 0v12M0 4.500h11M5 2.500L3.500 4.500 5 6.500" stroke="#d8d8d8" stroke-width="1" fill="none"/><path d="M11 5L8 9.500h2L9 13l3.500-5h-2z" fill="#d8d8d8"/></svg>
<div class="hr" style="top:339px"></div>
<span class="t" style="left:7px;top:344.5px;transform:scaleX(0.975);transform-origin:left">Quick Actions</span>
<div class="btn" style="left:7px;top:359.3px;width:156.500px;height:14.500px"></div>
<span class="t" style="left:7px;top:362.8px;width:156.500px;text-align:center;transform:scaleX(0.984);transform-origin:center">Import File</span>
</div>

<!-- DOCK -->
<div id="dock">
<div style="left:0;top:0;width:960px;height:47px;background:linear-gradient(90deg,#73825a 0,#70805a 12%,#6e7e56 25%,#75844f 38%,#8a9650 50%,#8f9a58 58%,#a3a27e 66%,#b5ad98 72%,#8e9670 77.5%,#6f7f58 80%,#6a7c54 90%,#6a7d52 100%)"></div>
<div style="left:0;top:0;width:960px;height:47px;background:linear-gradient(180deg,rgba(0,0,0,.06),rgba(0,0,0,0) 40%,rgba(255,255,255,.04))"></div>
<div style="left:600px;top:0;width:160px;height:47px;background:radial-gradient(ellipse 60px 58px at 90px 36px,rgba(214,203,190,.9),rgba(200,192,168,.6) 50%,rgba(180,175,140,0) 100%)"></div>
<div style="left:0;top:0;width:960px;height:1px;background:rgba(255,255,255,.18)"></div>
<div style="left:7px;top:8px;width:29px;height:28px;border-radius:3px;overflow:hidden;background:#dfe8f3"><div style="left:0;top:0;width:15px;height:28px;background:linear-gradient(180deg,#2fb0f5,#1a7fe0)"></div></div>
<svg style="left:7px;top:8px" width="29" height="28" viewBox="0 0 29 28"><path d="M16.500 0C13.500 6 12.800 11 13 15.500h3.200c-.2 4 .2 8 1.300 12.500" fill="none" stroke="#1a3f66" stroke-width="1"/><path d="M6 18.500c5 4.500 12 4.500 17 0" fill="none" stroke="#16324f" stroke-width="1.300" stroke-linecap="round"/><path d="M8.500 7.500v3M21 7.500v3" stroke="#16324f" stroke-width="1.400" stroke-linecap="round"/></svg>
<div style="left:44px;top:6.5px;width:31px;height:31px;border-radius:50%;background:linear-gradient(180deg,#c9ccd0 0,#a9acb0 45%,#7e8185 100%);border:1px solid #d3d6d9"></div><svg style="left:48px;top:11.5px" width="22" height="23" viewBox="0 0 22 23"><path d="M21 1.500c-6 .5-10.500 4-13.500 9.500l-1 3.500 3 3 3.500-1c5.500-3.500 8.500-8.500 8-15z" fill="#3f4246"/><path d="M8 10L1 12.500l4.500 2.500zM13 16l-2.500 6-2-4.500z" fill="#3f4246"/><path d="M5.500 16.500c-2 1-3 3-3 5 2-.3 3.800-1.300 4.500-3.500z" fill="#3f4246"/><circle cx="15" cy="7.500" r="1.800" fill="#a8abaf"/></svg>
<div style="left:83px;top:8px;width:30px;height:28px;border-radius:1.500px;background:linear-gradient(180deg,#bcc0c4,#8a8d90);box-shadow:0 1px 1px rgba(0,0,0,.35)"></div><svg style="left:85px;top:9px" width="26" height="26" viewBox="0 0 26 26"><circle cx="13" cy="13" r="12.300" fill="#2f3235"/><circle cx="13" cy="13" r="10.400" fill="none" stroke="#cdd0d2" stroke-width="2.400" stroke-dasharray="1.500 1.220"/><circle cx="13" cy="13" r="8.300" fill="#5c5f63" stroke="#d3d5d7" stroke-width="1.600"/><path d="M13 13L21 13M13 13L9 6.100M13 13L9 19.900" stroke="#d3d5d7" stroke-width="1.700"/><circle cx="13" cy="13" r="1.500" fill="#d3d5d7"/></svg>
<div style="left:121px;top:6.5px;width:31px;height:31px;border-radius:50%;background:radial-gradient(circle at 50% 40%,#4db4f7,#1b7de6 70%);border:1.800px solid #e6e8ea"></div>
<svg style="left:121px;top:6.5px" width="31" height="31" viewBox="0 0 31 31"><circle cx="15.500" cy="15.500" r="12" fill="none" stroke="#cfe6fb" stroke-width="1.400" stroke-dasharray=".7 1.300"/><path d="M23.500 7.500L13.800 13.800 17.200 17.200z" fill="#ef3b32"/><path d="M7.500 23.500L13.800 13.800 17.200 17.200z" fill="#f2f2f2"/></svg>
<svg style="left:159px;top:6px" width="32" height="32" viewBox="0 0 32 32"><circle cx="16" cy="16" r="15.800" fill="#e9453a"/><path d="M16.00 8.70L30.24 8.70A16 16 0 0 0 2.56 7.32L9.68 19.65A7.3 7.3 0 0 1 16.00 8.70z" fill="#e9453a"/><path d="M22.32 19.65L15.20 31.98A16 16 0 0 0 30.24 8.70L16.00 8.70A7.3 7.3 0 0 1 22.32 19.65z" fill="#fbc926"/><path d="M9.68 19.65L2.56 7.32A16 16 0 0 0 15.20 31.98L22.32 19.65A7.3 7.3 0 0 1 9.68 19.65z" fill="#21a15a"/><circle cx="16" cy="16" r="7.300" fill="#f3f4f4"/><circle cx="16" cy="16" r="5.800" fill="#4a8cf5"/></svg>
<div style="left:200.5px;top:7.5px;width:25px;height:29px;background:#eef1f4;transform:rotate(-7deg);box-shadow:0 0 1px #444"></div>
<div style="left:202.5px;top:9.5px;width:21px;height:25px;background:linear-gradient(180deg,#4a96e6,#7db9ef 55%,#c3def5);transform:rotate(-7deg)"></div>
<svg style="left:203px;top:12px" width="20" height="18" viewBox="0 0 20 18"><path d="M3 1c3 0 5 2.500 6.500 6 3-1 7 0 9.500 4.500-3-1.500-5-1.500-7-.5 0 3-2 5.500-5 6 1.500-2 1.500-3.500.5-5.500-2 0-3-1.500-3.500-3.500 1-1.500.5-4-1-7z" fill="#8a6a48"/><path d="M3.500 1.500c2.500.5 3.500 3 4.500 5.500l-3 1c.5-2 0-4.500-1.500-6.500z" fill="#e4e0d8"/><path d="M12 11.500c2.500-.5 4.500 0 6.500 1.500-2 0-4 .5-6 1.500z" fill="#5f6a78"/></svg>
<div style="left:239px;top:9px;width:27px;height:27px;border-radius:2.500px;background:#6d6f73;transform:rotate(-4deg)"></div><div style="left:238px;top:7.3px;width:27px;height:27px;border-radius:2.500px;background:#f6f6f6;transform:rotate(-4deg);overflow:hidden"><div style="left:0;top:0;width:27px;height:8.500px;background:#ea4b42"></div><span class="t" style="left:0;top:1.800px;width:27px;text-align:center;font-size:5.600px;color:#fff;font-weight:bold;letter-spacing:.2px">MAY</span><span class="t" style="left:0;top:9px;width:27px;text-align:center;font-size:18.500px;color:#2b2b2b;letter-spacing:-.4px">25</span></div>
<div style="left:275px;top:6.5px;width:31px;height:31px;border-radius:50%;background:linear-gradient(180deg,#22b2f9,#1b86ee 50%,#1a64e4)"></div>
<svg style="left:280px;top:11px" width="21" height="21" viewBox="0 0 21 21"><path d="M12 3L4.800 16.200M9 3L16.200 16.200M1.800 12.500H19.200" stroke="#fff" stroke-width="2.100" stroke-linecap="round" fill="none"/></svg>
<div style="left:313px;top:6.7px;width:31px;height:31px;border-radius:50%;background:radial-gradient(circle at 50% 40%,#ffffff,#ececec 75%,#d8d8d8);box-shadow:0 0 0 .5px #c4c4c4"></div><svg style="left:313px;top:6.7px" width="31" height="31" viewBox="0 0 31 31"><ellipse cx="15.500" cy="8.700" rx="3.900" ry="6.100" fill="#f6a11f" opacity=".88" transform="rotate(0 15.500 15.500)"/><ellipse cx="15.500" cy="8.700" rx="3.900" ry="6.100" fill="#f2d22c" opacity=".88" transform="rotate(45 15.500 15.500)"/><ellipse cx="15.500" cy="8.700" rx="3.900" ry="6.100" fill="#a5cf55" opacity=".88" transform="rotate(90 15.500 15.500)"/><ellipse cx="15.500" cy="8.700" rx="3.900" ry="6.100" fill="#57bd8c" opacity=".88" transform="rotate(135 15.500 15.500)"/><ellipse cx="15.500" cy="8.700" rx="3.900" ry="6.100" fill="#56a5ea" opacity=".88" transform="rotate(180 15.500 15.500)"/><ellipse cx="15.500" cy="8.700" rx="3.900" ry="6.100" fill="#9b80d4" opacity=".88" transform="rotate(225 15.500 15.500)"/><ellipse cx="15.500" cy="8.700" rx="3.900" ry="6.100" fill="#cf6fae" opacity=".88" transform="rotate(270 15.500 15.500)"/><ellipse cx="15.500" cy="8.700" rx="3.900" ry="6.100" fill="#ef5848" opacity=".88" transform="rotate(315 15.500 15.500)"/></svg>
<div style="left:377px;top:7.5px;width:4px;height:24px;transform:rotate(-5deg);background:linear-gradient(180deg,#e4e4e4 0,#d9d9d9 28%,#6fb3e8 28%,#6fb3e8 50%,#7fc455 50%,#7fc455 74%,#f0c23c 74%,#f0c23c 100%);border-radius:0 1.500px 1.500px 0"></div><div style="left:354px;top:5.7px;width:25px;height:31px;border-radius:2.500px;background:linear-gradient(90deg,#9a6e3a 0,#b98d55 10%,#b58a52 100%);transform:rotate(-5deg);box-shadow:0 1px 1px rgba(0,0,0,.3)"></div><svg style="left:359px;top:12px" width="15" height="15" viewBox="0 0 15 15" transform="rotate(-5)"><circle cx="7.500" cy="7.500" r="7" fill="#ad8048" stroke="#a07540" stroke-width=".6"/><circle cx="7.500" cy="5.800" r="2.400" fill="#9a6f3c"/><path d="M2.800 12.500c.7-3 2.500-3.800 4.700-3.800s4 .8 4.700 3.800a7 7 0 0 1-9.400 0z" fill="#9a6f3c"/></svg>
<svg style="left:388px;top:5px" width="37" height="34" viewBox="0 0 37 34"><defs><linearGradient id="mg" x1="0" y1="0" x2="0" y2="1"><stop offset="0" stop-color="#5cbcf9"/><stop offset="1" stop-color="#1f82ef"/></linearGradient></defs><ellipse cx="17.500" cy="15" rx="15.500" ry="12" fill="url(#mg)"/><path d="M8 23c0 3.500-1.500 6-4.500 7.500 4.500 0 7.500-1.500 9.500-4.500z" fill="#2186ef"/><ellipse cx="22.700" cy="22.700" rx="9.600" ry="7.400" fill="#eef3f9"/><path d="M27 28.500c.8 1.800 2 2.800 4 3.500-3.500.3-6-.5-8-2.200z" fill="#eef3f9"/><circle cx="18" cy="22.700" r="1.450" fill="#1d4fbf"/><circle cx="22.700" cy="22.700" r="1.450" fill="#1d4fbf"/><circle cx="27.400" cy="22.700" r="1.450" fill="#1d4fbf"/></svg>
<div style="left:445px;top:11.3px;width:15.500px;height:16px;background:#f4e88e;transform:rotate(2deg);box-shadow:0 1px 1px rgba(0,0,0,.3)"></div><div style="left:436.5px;top:25px;width:19px;height:11px;background:#f6ec9c;transform:rotate(-2deg);box-shadow:0 1px 1px rgba(0,0,0,.3)"></div><div style="left:428px;top:8.5px;width:19.500px;height:17px;background:#f5ea98;transform:rotate(-10deg);box-shadow:0 1px 1px rgba(0,0,0,.3)"></div><svg style="left:428px;top:7px" width="33" height="30" viewBox="0 0 33 30"><g transform="rotate(-10 10 10)"><path d="M7 6h5M4 8.500h12M4 10.500h11M4.500 12.500h11" stroke="#8f8a60" stroke-width=".7"/></g><path d="M21 12.500h2M24 12.500h1.500M26.500 12.500h1.500" stroke="#e0352b" stroke-width="1.200"/><path d="M15 23.500h4.500" stroke="#30389a" stroke-width="1.200"/><path d="M14 21h5" stroke="#a09a70" stroke-width=".6"/></svg>
<div style="left:466.5px;top:6.700px;width:31px;height:31px;border-radius:50%;background:#1ed760"></div>
<svg style="left:466.5px;top:6.700px" width="31" height="31" viewBox="0 0 31 31"><path d="M6.500 11.500c6-2 13-1.500 18.500 1.500" stroke="#141414" stroke-width="2.800" fill="none" stroke-linecap="round"/><path d="M7.500 16.500c5-1.500 10.500-1 15.500 1.500" stroke="#141414" stroke-width="2.300" fill="none" stroke-linecap="round"/><path d="M8.500 21c4-1 8.500-.8 12.500 1.300" stroke="#141414" stroke-width="1.900" fill="none" stroke-linecap="round"/></svg>
<svg style="left:505px;top:6px" width="34" height="32" viewBox="0 0 34 32"><path d="M11 3L25 1.500 28.500 12 13 14.500z" fill="#fbfbfb" stroke="#c9c9c9" stroke-width=".5"/><path d="M3.500 16L12 11.500 29 10.500 32.500 15.500V23L27.500 26.500 6 24 3.500 21.500z" fill="#eef0f1" stroke="#b9bcbf" stroke-width=".6"/><path d="M3.500 16L25 18 32.500 15.500M25 18V26" fill="none" stroke="#b0b3b6" stroke-width=".6"/><path d="M8 21L2 28.500 18 31 22.500 23z" fill="#fdfdfd" stroke="#bdbdbd" stroke-width=".5"/><path d="M7 23.500L20 25M5.500 25.500L19 27.500M4 27.500L18 29.500" stroke="#d0d0d0" stroke-width=".5"/><rect x="12" y="19.300" width="5" height="1.500" fill="#777" transform="rotate(5 14 20)"/></svg>
<div style="left:550px;top:8px;width:25px;height:27px;border-radius:2px;overflow:hidden;background:#1a5dc0"><div style="left:0;top:0;width:25px;height:7px;background:#41a5ee"></div><div style="left:0;top:7px;width:25px;height:7px;background:#2b7cd3"></div><div style="left:0;top:14px;width:25px;height:7px;background:#185abd"></div><div style="left:0;top:21px;width:25px;height:6px;background:#103f91"></div></div>
<div style="left:543.5px;top:13.5px;width:15px;height:15px;border-radius:1.500px;background:#1a52b4;box-shadow:1px 1px 2px rgba(0,0,0,.4)"></div>
<span class="t" style="left:543.5px;top:15.8px;width:15px;text-align:center;font-size:10.500px;font-weight:bold;color:#fff">W</span>
<div style="left:587.3px;top:7px;width:1px;height:33px;background:rgba(40,50,30,.55)"></div>
<div style="left:598px;top:5px;width:33px;height:32px;background:#470137;border:1.800px solid #ff3f94;border-radius:1px"></div>
<span class="t" style="left:598px;top:10px;width:33px;text-align:center;font-size:22px;color:#ff4aa0;letter-spacing:.2px;-webkit-text-stroke:.5px #ff4aa0;transform:scaleX(.92)">Id</span>
<div style="left:636.5px;top:5px;width:33px;height:32px;background:#001e28;border:1.800px solid #2ac4f3;border-radius:3.500px"></div>
<span class="t" style="left:636.5px;top:10.5px;width:33px;text-align:center;font-size:20.500px;color:#d6f2fb;letter-spacing:-.2px;-webkit-text-stroke:.45px #d6f2fb;transform:scaleX(.83)">Ps</span>
<div style="left:675.3px;top:5px;width:32.500px;height:32px;background:#2b1c00;border:1.800px solid #f5b91c;border-radius:1px"></div>
<span class="t" style="left:675.3px;top:10.5px;width:32.500px;text-align:center;font-size:20.500px;color:#f7b91e;letter-spacing:-.2px;-webkit-text-stroke:.45px #f7b91e;transform:scaleX(.87)">Br</span>
<svg style="left:713.5px;top:5.5px" width="33" height="33" viewBox="0 0 33 33"><path d="M16.500 1A15.500 15.500 0 0 0 3 24L1 32l8.300-2A15.500 15.500 0 1 0 16.500 1z" fill="#f3f3f3"/><path d="M16.500 3.200A13.300 13.300 0 0 0 5.300 23.600L4 29l5.600-1.400A13.300 13.300 0 1 0 16.500 3.200z" fill="#2ecb5f"/><path d="M11.500 9c-.8.200-2 1.500-1.800 3.300.3 2.700 3 6.500 6.300 8.500 2.300 1.400 4.300 1.500 5.500.5.900-.8 1.200-1.800.9-2.200l-2.800-1.500c-.5-.2-.8 0-1.100.4l-.8 1c-.3.300-.6.300-1 .1-1.800-.9-3.300-2.400-4.200-4.100-.2-.4-.1-.7.100-.9l.8-.9c.3-.3.300-.7.200-1L12.500 9.500c-.2-.5-.5-.6-1-.5z" fill="#fff"/></svg>
<div style="left:758px;top:7px;width:1px;height:33px;background:rgba(40,50,30,.55)"></div>
<div style="left:768px;top:9.5px;width:34px;height:25px;background:#f3f4f5;box-shadow:0 0 1px #444;overflow:hidden"><div style="left:0;top:0;width:34px;height:1.500px;background:#5a8fd9"></div><div style="left:0;top:1.500px;width:34px;height:2.500px;background:#e6e8eb"></div><div style="left:6px;top:5px;width:22px;height:20px;background:#fdfdfd"></div><div style="left:9px;top:8px;width:11px;height:12px;background:repeating-linear-gradient(180deg,#b5b5b5 0,#b5b5b5 .6px,transparent .6px,transparent 2px)"></div></div><div style="left:791.5px;top:26.3px;width:10px;height:10px;background:linear-gradient(180deg,#41a5ee 0,#2b7cd3 40%,#185abd 70%,#103f91 100%);border-radius:1px"></div><div style="left:789.5px;top:28.3px;width:7.500px;height:7.500px;background:#1b54b6;border-radius:1px;box-shadow:.5px .5px 1px rgba(0,0,0,.45)"></div><span class="t" style="left:789.5px;top:29.5px;width:7.500px;text-align:center;font-size:5.400px;font-weight:bold;color:#fff">W</span>
<div style="left:806.5px;top:9.5px;width:34px;height:25px;background:#f3f4f5;box-shadow:0 0 1px #444;overflow:hidden"><div style="left:0;top:0;width:34px;height:1.500px;background:#5a8fd9"></div><div style="left:0;top:1.500px;width:34px;height:2.500px;background:#e6e8eb"></div><div style="left:6px;top:5px;width:22px;height:20px;background:#fdfdfd"></div><div style="left:9px;top:8px;width:11px;height:12px;background:repeating-linear-gradient(180deg,#b5b5b5 0,#b5b5b5 .6px,transparent .6px,transparent 2px)"></div></div><div style="left:830.0px;top:26.3px;width:10px;height:10px;background:linear-gradient(180deg,#41a5ee 0,#2b7cd3 40%,#185abd 70%,#103f91 100%);border-radius:1px"></div><div style="left:828.0px;top:28.3px;width:7.500px;height:7.500px;background:#1b54b6;border-radius:1px;box-shadow:.5px .5px 1px rgba(0,0,0,.45)"></div><span class="t" style="left:828.0px;top:29.5px;width:7.500px;text-align:center;font-size:5.400px;font-weight:bold;color:#fff">W</span>
<div style="left:845.3px;top:12.5px;width:34px;height:19.500px;background:#f5f5f6;box-shadow:0 0 1px #444;overflow:hidden"><div style="left:0;top:0;width:34px;height:2px;background:#dddddf"></div><div style="left:0;top:2px;width:6px;height:18px;background:#e6e8ea"></div><div style="left:8.500px;top:4.500px;width:18px;height:13px;background:repeating-linear-gradient(90deg,#9a8f84 0,#9a8f84 2.200px,transparent 2.200px,transparent 6.500px);opacity:.55"></div><div style="left:6px;top:8.500px;width:28px;height:3.500px;background:#f5f5f6"></div></div><div style="left:867.3px;top:27px;width:11px;height:11px;background:#e8eef6;border-radius:1.500px;overflow:hidden;box-shadow:0 0 .5px #555"><div style="left:0;top:0;width:6px;height:11px;background:linear-gradient(180deg,#35b0f6,#1b80e2)"></div></div>
<div style="left:883.5px;top:12.5px;width:34px;height:19.500px;background:#f5f5f6;box-shadow:0 0 1px #444;overflow:hidden"><div style="left:0;top:0;width:34px;height:2px;background:#dddddf"></div><div style="left:0;top:2px;width:6px;height:18px;background:#e6e8ea"></div><div style="left:8.500px;top:4.500px;width:18px;height:13px;background:repeating-linear-gradient(90deg,#9a8f84 0,#9a8f84 2.200px,transparent 2.200px,transparent 6.500px);opacity:.55"></div><div style="left:6px;top:8.500px;width:28px;height:3.500px;background:#f5f5f6"></div><div style="left:25px;top:3.500px;width:6.500px;height:8.500px;background:#55575a;transform:rotate(6deg);border:.5px solid #ddd"></div></div><div style="left:905.5px;top:27px;width:11px;height:11px;background:#e8eef6;border-radius:1.500px;overflow:hidden;box-shadow:0 0 .5px #555"><div style="left:0;top:0;width:6px;height:11px;background:linear-gradient(180deg,#35b0f6,#1b80e2)"></div></div>
<svg style="left:925.5px;top:5px" width="27" height="33" viewBox="0 0 27 33"><path d="M1.500 5.500L5 31c.2 1 3.500 1.800 8.500 1.800s8.300-.8 8.500-1.800L25.500 5.500z" fill="rgba(232,236,236,.88)" stroke="#c5caca" stroke-width=".6"/><ellipse cx="13.500" cy="5.500" rx="12.300" ry="3.600" fill="#d4d9d9" stroke="#f3f3f3" stroke-width=".8"/><path d="M5 5l3-3 3 2.500 3-3 3.500 3 3-1.500 1.500 2.500c-3 2-14 2-17 -.5z" fill="#a9aeb0"/><path d="M8 3.500l2 1M14 2.500l2 2" stroke="#5a8fd0" stroke-width=".9"/><path d="M7 10L9 30M13.500 10V31M20 10L18 30" stroke="rgba(255,255,255,.5)" stroke-width=".8"/></svg>
</div>
<div class="badge" style="left:136px;top:597.7px">1</div>
<div class="badge" style="left:250.5px;top:598px">10</div>
<div class="badge" style="left:328px;top:598px">1</div>
<div class="badge" style="left:443px;top:598px">1</div>
<div class="dot" style="left:52px"></div>
<div class="dot" style="left:167.5px"></div>
<div class="dot" style="left:244.5px"></div>
<div class="dot" style="left:475px"></div>
<div class="dot" style="left:513px"></div>
<div class="dot" style="left:590px"></div>
<div class="dot" style="left:645px"></div>
<div class="dot" style="left:683.5px"></div>
<div class="dot" style="left:722px"></div>
<div class="dot" style="left:760.5px"></div>

</div>
</body>
</html>
